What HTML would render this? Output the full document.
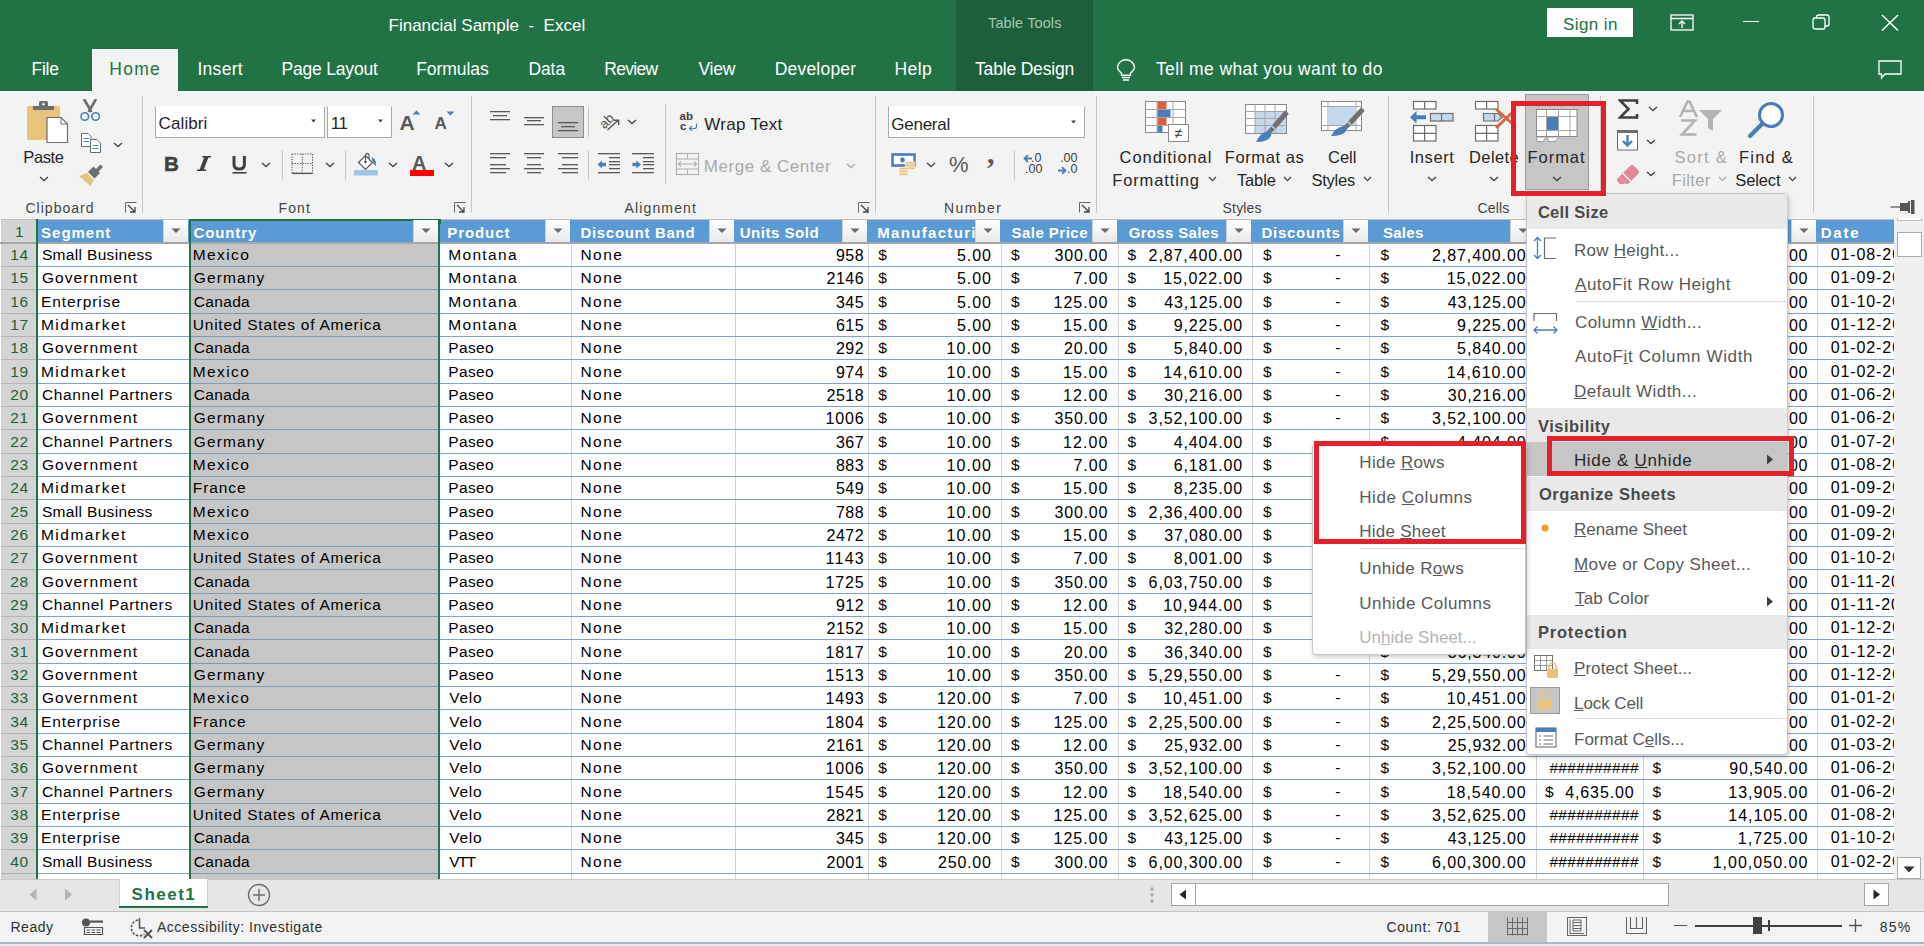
<!DOCTYPE html>
<html><head><meta charset="utf-8"><title>Financial Sample - Excel</title>
<style>
html,body{margin:0;padding:0;}
body{width:1924px;height:946px;overflow:hidden;position:relative;background:#f3f3f3;font-family:"Liberation Sans", sans-serif;}
.r{position:absolute;}
.t{position:absolute;white-space:nowrap;}
</style></head><body>
<div class="r" style="left:0px;top:0px;width:1924px;height:91px;background:#217346"></div><div class="r" style="left:956px;top:0px;width:137px;height:91px;background:#1d5f3a"></div><div class="t" style="left:388.50px;top:16.81px;font-size:17px;line-height:17px;color:#ffffff;font-weight:normal;letter-spacing:0.006px;">Financial Sample &nbsp;-&nbsp; Excel</div><div class="t" style="left:988.10px;top:15.73px;font-size:14.5px;line-height:14.5px;color:#a3c9b0;font-weight:normal;letter-spacing:0.101px;">Table Tools</div><div class="r" style="left:1547px;top:8px;width:86px;height:29px;background:#ffffff"></div><div class="t" style="left:1563.00px;top:15.61px;font-size:17px;line-height:17px;color:#217346;font-weight:normal;letter-spacing:0.413px;">Sign in</div><div class="r" style="left:92px;top:49px;width:86px;height:42px;background:#f3f3f3"></div><div class="t" style="left:31.50px;top:61.19px;font-size:17.5px;line-height:17.5px;color:#ffffff;font-weight:normal;letter-spacing:-0.255px;">File</div><div class="t" style="left:109.30px;top:61.19px;font-size:17.5px;line-height:17.5px;color:#217346;font-weight:normal;letter-spacing:1.251px;">Home</div><div class="t" style="left:197.40px;top:61.19px;font-size:17.5px;line-height:17.5px;color:#ffffff;font-weight:normal;letter-spacing:0.299px;">Insert</div><div class="t" style="left:281.50px;top:61.19px;font-size:17.5px;line-height:17.5px;color:#ffffff;font-weight:normal;letter-spacing:-0.191px;">Page Layout</div><div class="t" style="left:416.20px;top:61.19px;font-size:17.5px;line-height:17.5px;color:#ffffff;font-weight:normal;letter-spacing:-0.054px;">Formulas</div><div class="t" style="left:528.40px;top:61.19px;font-size:17.5px;line-height:17.5px;color:#ffffff;font-weight:normal;letter-spacing:-0.078px;">Data</div><div class="t" style="left:604.30px;top:61.19px;font-size:17.5px;line-height:17.5px;color:#ffffff;font-weight:normal;letter-spacing:-0.728px;">Review</div><div class="t" style="left:698.40px;top:61.19px;font-size:17.5px;line-height:17.5px;color:#ffffff;font-weight:normal;letter-spacing:-0.192px;">View</div><div class="t" style="left:774.70px;top:61.19px;font-size:17.5px;line-height:17.5px;color:#ffffff;font-weight:normal;letter-spacing:0.208px;">Developer</div><div class="t" style="left:894.50px;top:61.19px;font-size:17.5px;line-height:17.5px;color:#ffffff;font-weight:normal;letter-spacing:0.447px;">Help</div><div class="t" style="left:975.00px;top:61.19px;font-size:17.5px;line-height:17.5px;color:#ffffff;font-weight:normal;letter-spacing:-0.176px;">Table Design</div><div class="t" style="left:1155.90px;top:61.19px;font-size:17.5px;line-height:17.5px;color:#ffffff;font-weight:normal;letter-spacing:0.407px;">Tell me what you want to do</div><div class="r" style="left:0px;top:91px;width:1924px;height:128px;background:#f3f3f3"></div><div class="r" style="left:142px;top:96px;width:1px;height:117px;background:#c8c8c8"></div><div class="r" style="left:471px;top:96px;width:1px;height:117px;background:#c8c8c8"></div><div class="r" style="left:875px;top:96px;width:1px;height:117px;background:#c8c8c8"></div><div class="r" style="left:1096px;top:96px;width:1px;height:117px;background:#c8c8c8"></div><div class="r" style="left:1388px;top:96px;width:1px;height:117px;background:#c8c8c8"></div><div class="r" style="left:1600px;top:96px;width:1px;height:117px;background:#c8c8c8"></div><div class="r" style="left:1813px;top:96px;width:1px;height:117px;background:#c8c8c8"></div><div class="t" style="left:25.40px;top:200.85px;font-size:14px;line-height:14px;color:#444444;font-weight:normal;letter-spacing:1.033px;">Clipboard</div><div class="t" style="left:278.60px;top:200.85px;font-size:14px;line-height:14px;color:#444444;font-weight:normal;letter-spacing:1.092px;">Font</div><div class="t" style="left:624.50px;top:200.85px;font-size:14px;line-height:14px;color:#444444;font-weight:normal;letter-spacing:1.142px;">Alignment</div><div class="t" style="left:944.00px;top:200.85px;font-size:14px;line-height:14px;color:#444444;font-weight:normal;letter-spacing:1.434px;">Number</div><div class="t" style="left:1222.60px;top:200.85px;font-size:14px;line-height:14px;color:#444444;font-weight:normal;letter-spacing:0.155px;">Styles</div><div class="t" style="left:1477.60px;top:200.85px;font-size:14px;line-height:14px;color:#444444;font-weight:normal;letter-spacing:0.146px;">Cells</div><svg class="r" style="left:26px;top:100px;" width="44" height="44" viewBox="0 0 44 44"><rect x="1" y="6" width="33" height="34" rx="1.5" fill="#e8c37b"/><rect x="7" y="6" width="21" height="4" fill="#6d6d6d"/><rect x="13" y="1" width="9" height="6" rx="1.5" fill="#6d6d6d"/><circle cx="17.5" cy="4.2" r="1.3" fill="#f3f3f3"/><path d="M21 17.5H35L41.5 24V42.5H21Z" fill="#ffffff" stroke="#6d6d6d" stroke-width="1.2"/><path d="M35 17.5V24H41.5" fill="none" stroke="#6d6d6d" stroke-width="1"/></svg><div class="t" style="left:23.30px;top:148.73px;font-size:16.5px;line-height:16.5px;color:#262626;font-weight:normal;letter-spacing:-0.379px;">Paste</div><svg class="r" style="left:39.0px;top:176px;" width="10" height="6" viewBox="0 0 10 6"><path d="M1 1L5.0 4.6L9 1" fill="none" stroke="#444" stroke-width="1.3"/></svg><svg class="r" style="left:79px;top:99px;" width="22" height="23" viewBox="0 0 22 23"><path d="M5.5 1L12 12M16.5 1L10 12" stroke="#6d6d6d" stroke-width="2.6" stroke-linecap="round"/><circle cx="5.8" cy="17.5" r="3.8" fill="none" stroke="#4a7ebb" stroke-width="1.6"/><circle cx="16.6" cy="17.5" r="3.8" fill="none" stroke="#4a7ebb" stroke-width="1.6"/></svg><svg class="r" style="left:80px;top:132px;" width="23" height="22" viewBox="0 0 23 22"><path d="M1.5 1.5H8L11 4.5V14.5H1.5Z" fill="#fff" stroke="#6d6d6d" stroke-width="1"/><path d="M3.5 6.5H9M3.5 9.5H9" stroke="#4a7ebb" stroke-width="1"/><path d="M10.5 7.5H17L20.5 11V20.5H10.5Z" fill="#fff" stroke="#6d6d6d" stroke-width="1"/><path d="M12.5 13.5H18.5M12.5 16.5H18.5" stroke="#4a7ebb" stroke-width="1"/></svg><svg class="r" style="left:113.0px;top:142px;" width="10" height="6" viewBox="0 0 10 6"><path d="M1 1L5.0 4.6L9 1" fill="none" stroke="#444" stroke-width="1.3"/></svg><svg class="r" style="left:78px;top:164px;" width="26" height="23" viewBox="0 0 26 23"><path d="M17.5 5.5L22.5 0.5L25 3L20 8Z" fill="#6d6d6d"/><path d="M10 8L15.5 2.5L22 9L16.5 14.5Z" fill="#6d6d6d"/><path d="M1 12L9 9L16 16L12.5 22Z" fill="#e8c37b"/></svg><svg class="r" style="left:125px;top:202px;" width="12" height="11" viewBox="0 0 12 11"><path d="M0.5 10.5V0.5H11.5" fill="none" stroke="#666" stroke-width="1"/><path d="M3 3L10 10M10 5V10H5" fill="none" stroke="#444" stroke-width="1.3"/></svg><div class="r" style="left:155px;top:106px;width:170px;height:32px;background:#fff;border:1px solid #ababab;border-top-color:#ffffff;box-sizing:border-box"></div><div class="t" style="left:158.60px;top:115.41px;font-size:17px;line-height:17px;color:#262626;font-weight:normal;letter-spacing:0.100px;">Calibri</div><svg class="r" style="left:310px;top:119px;" width="7" height="5" viewBox="0 0 7 5"><path d="M1 0.5H6L3.5 3.5Z" fill="#444"/></svg><div class="r" style="left:327px;top:106px;width:65px;height:32px;background:#fff;border:1px solid #ababab;border-top-color:#ffffff;box-sizing:border-box"></div><div class="t" style="left:330.80px;top:115.41px;font-size:17px;line-height:17px;color:#262626;font-weight:normal;letter-spacing:-0.393px;">11</div><svg class="r" style="left:377px;top:119px;" width="7" height="5" viewBox="0 0 7 5"><path d="M1 0.5H6L3.5 3.5Z" fill="#444"/></svg><div class="t" style="left:399.50px;top:112.02px;font-size:21px;line-height:21px;color:#595959;font-weight:bold;">A</div><svg class="r" style="left:412px;top:110px;" width="9" height="5" viewBox="0 0 9 5"><path d="M0.5 4.5L4.5 0.5L8.5 4.5Z" fill="#4a7ebb"/></svg><div class="t" style="left:434.50px;top:115.41px;font-size:17px;line-height:17px;color:#595959;font-weight:bold;">A</div><svg class="r" style="left:446px;top:111px;" width="9" height="5" viewBox="0 0 9 5"><path d="M0.5 0.5H8.5L4.5 4.5Z" fill="#4a7ebb"/></svg><div class="t" style="left:164.00px;top:153.95px;font-size:20.5px;line-height:20.5px;color:#404040;font-weight:bold;-webkit-text-stroke:0.5px #404040">B</div><svg class="r" style="left:196px;top:155px;" width="16" height="17" viewBox="0 0 16 17"><path d="M6.5 1H15V2.6H12.4L7.8 14.4H10.2V16H1V14.4H3.6L8.2 2.6H6Z" fill="#404040"/></svg><svg class="r" style="left:231px;top:155px;" width="17" height="20" viewBox="0 0 17 20"><path d="M3 1V9.5Q3 14 8.2 14Q13.4 14 13.4 9.5V1" fill="none" stroke="#404040" stroke-width="3"/><rect x="1.5" y="17" width="14" height="1.6" fill="#404040"/></svg><svg class="r" style="left:261.0px;top:162px;" width="10" height="6" viewBox="0 0 10 6"><path d="M1 1L5.0 4.6L9 1" fill="none" stroke="#444" stroke-width="1.3"/></svg><div class="r" style="left:282px;top:150px;width:1px;height:30px;background:#c8c8c8"></div><svg class="r" style="left:291px;top:153px;" width="23" height="22" viewBox="0 0 23 22"><rect x="1" y="1" width="20.5" height="19" fill="none" stroke="#555" stroke-width="1" stroke-dasharray="1.3 1.3"/><path d="M11.2 1V20M1 10.5H21.5" stroke="#555" stroke-width="1" stroke-dasharray="1.3 1.3"/><path d="M1 20.5H21.5" stroke="#555" stroke-width="1.2"/></svg><svg class="r" style="left:325.0px;top:162px;" width="10" height="6" viewBox="0 0 10 6"><path d="M1 1L5.0 4.6L9 1" fill="none" stroke="#444" stroke-width="1.3"/></svg><div class="r" style="left:345px;top:150px;width:1px;height:30px;background:#c8c8c8"></div><svg class="r" style="left:353px;top:152px;" width="26" height="25" viewBox="0 0 26 25"><path d="M5.5 10.5L12.5 3.5L19.5 10.5L12.5 17.5Z" fill="#fff" stroke="#555" stroke-width="1.2"/><path d="M12.5 10V2.8A1.8 1.8 0 0 1 16 2.8V6.5" fill="none" stroke="#555" stroke-width="1.1"/><circle cx="12.5" cy="10" r="1.3" fill="#555"/><path d="M18.5 5.5C21.5 6 23.5 9 23 14L20.5 11.5Z" fill="#4a7ebb"/><rect x="1" y="18" width="24" height="5.5" fill="#9dc3e6"/></svg><svg class="r" style="left:388.0px;top:162px;" width="10" height="6" viewBox="0 0 10 6"><path d="M1 1L5.0 4.6L9 1" fill="none" stroke="#444" stroke-width="1.3"/></svg><div class="t" style="left:412.00px;top:152.87px;font-size:20px;line-height:20px;color:#595959;font-weight:bold;">A</div><div class="r" style="left:410px;top:170px;width:24px;height:6px;background:#ff0000"></div><svg class="r" style="left:444.0px;top:162px;" width="10" height="6" viewBox="0 0 10 6"><path d="M1 1L5.0 4.6L9 1" fill="none" stroke="#444" stroke-width="1.3"/></svg><svg class="r" style="left:454px;top:202px;" width="12" height="11" viewBox="0 0 12 11"><path d="M0.5 10.5V0.5H11.5" fill="none" stroke="#666" stroke-width="1"/><path d="M3 3L10 10M10 5V10H5" fill="none" stroke="#444" stroke-width="1.3"/></svg><svg class="r" style="left:489px;top:110px;" width="22" height="12" viewBox="0 0 22 12"><rect x="1" y="1" width="20" height="1.3" fill="#595959"/><rect x="4" y="5" width="14" height="1.3" fill="#595959"/><rect x="1" y="9" width="20" height="1.3" fill="#595959"/></svg><svg class="r" style="left:523px;top:116px;" width="22" height="12" viewBox="0 0 22 12"><rect x="1" y="1" width="20" height="1.3" fill="#595959"/><rect x="4" y="4" width="14" height="1.3" fill="#595959"/><rect x="1" y="8" width="20" height="1.3" fill="#595959"/></svg><div class="r" style="left:552px;top:106px;width:32px;height:32px;background:#c6c6c6;border:1px solid #8e8e8e;box-sizing:border-box"></div><svg class="r" style="left:557px;top:121px;" width="22" height="12" viewBox="0 0 22 12"><rect x="1" y="1" width="20" height="1.3" fill="#595959"/><rect x="4" y="5" width="14" height="1.3" fill="#595959"/><rect x="1" y="9" width="20" height="1.3" fill="#595959"/></svg><div class="r" style="left:588px;top:107px;width:1px;height:30px;background:#c8c8c8"></div><svg class="r" style="left:597px;top:110px;" width="26" height="24" viewBox="0 0 26 24"><text x="0" y="0" transform="translate(7.5,19.5) rotate(-45)" font-family="Liberation Sans" font-size="13.5" fill="#555">ab</text><path d="M10.5 20L21.5 10M17 10.3H21.7V15" fill="none" stroke="#555" stroke-width="1.4"/></svg><svg class="r" style="left:627.0px;top:119px;" width="10" height="6" viewBox="0 0 10 6"><path d="M1 1L5.0 4.6L9 1" fill="none" stroke="#444" stroke-width="1.3"/></svg><div class="r" style="left:665px;top:104px;width:1px;height:80px;background:#c8c8c8"></div><svg class="r" style="left:489px;top:153px;" width="22" height="22" viewBox="0 0 22 22"><rect x="1" y="0" width="20" height="1.3" fill="#595959"/><rect x="1" y="4" width="16" height="1.3" fill="#595959"/><rect x="1" y="11" width="16" height="1.3" fill="#595959"/><rect x="1" y="15" width="20" height="1.3" fill="#595959"/><rect x="1" y="19" width="16" height="1.3" fill="#595959"/></svg><svg class="r" style="left:523px;top:153px;" width="22" height="22" viewBox="0 0 22 22"><rect x="1" y="0" width="20" height="1.3" fill="#595959"/><rect x="4" y="4" width="14" height="1.3" fill="#595959"/><rect x="4" y="11" width="14" height="1.3" fill="#595959"/><rect x="1" y="15" width="20" height="1.3" fill="#595959"/><rect x="4" y="19" width="14" height="1.3" fill="#595959"/></svg><svg class="r" style="left:557px;top:153px;" width="22" height="22" viewBox="0 0 22 22"><rect x="1" y="0" width="20" height="1.3" fill="#595959"/><rect x="5" y="4" width="16" height="1.3" fill="#595959"/><rect x="5" y="11" width="16" height="1.3" fill="#595959"/><rect x="1" y="15" width="20" height="1.3" fill="#595959"/><rect x="5" y="19" width="16" height="1.3" fill="#595959"/></svg><div class="r" style="left:588px;top:150px;width:1px;height:30px;background:#c8c8c8"></div><svg class="r" style="left:596px;top:153px;" width="26" height="22" viewBox="0 0 26 22"><rect x="2" y="0" width="22" height="1.3" fill="#595959"/><rect x="13" y="4" width="11" height="1.3" fill="#595959"/><rect x="13" y="11" width="11" height="1.3" fill="#595959"/><rect x="13" y="15" width="11" height="1.3" fill="#595959"/><rect x="2" y="19" width="22" height="1.3" fill="#595959"/><rect x="13" y="8" width="11" height="1.3" fill="#595959"/><path d="M1.5 11.5L6 7.5V9.8H10V13.2H6V15.5Z" fill="#4a7ebb"/></svg><svg class="r" style="left:630px;top:153px;" width="26" height="22" viewBox="0 0 26 22"><rect x="2" y="0" width="22" height="1.3" fill="#595959"/><rect x="13" y="4" width="11" height="1.3" fill="#595959"/><rect x="13" y="11" width="11" height="1.3" fill="#595959"/><rect x="13" y="15" width="11" height="1.3" fill="#595959"/><rect x="2" y="19" width="22" height="1.3" fill="#595959"/><rect x="13" y="8" width="11" height="1.3" fill="#595959"/><path d="M11 11.5L6.5 7.5V9.8H2.5V13.2H6.5V15.5Z" fill="#4a7ebb"/></svg><div class="t" style="left:679.50px;top:110.77px;font-size:11.5px;line-height:11.5px;color:#404040;font-weight:bold;">ab</div><div class="t" style="left:680.00px;top:121.27px;font-size:11.5px;line-height:11.5px;color:#404040;font-weight:bold;">c</div><svg class="r" style="left:688px;top:123px;" width="10" height="8" viewBox="0 0 10 8"><path d="M8.5 0.5V3.5Q8.5 5.5 6.5 5.5H2M4 3L1.5 5.5L4 8" fill="none" stroke="#4a7ebb" stroke-width="1.2"/></svg><div class="t" style="left:704.30px;top:115.61px;font-size:17px;line-height:17px;color:#262626;font-weight:normal;letter-spacing:0.252px;">Wrap Text</div><svg class="r" style="left:675px;top:152px;" width="25" height="24" viewBox="0 0 25 24"><rect x="1.5" y="1.5" width="22" height="21" fill="none" stroke="#b0b0b0" stroke-width="1.1"/><path d="M1.5 7H23.5M1.5 17H23.5M12.5 1.5V7M12.5 17V22.5" stroke="#b0b0b0" stroke-width="1.1"/><path d="M3.5 12H21.5M6 9.5L3.5 12L6 14.5M19 9.5L21.5 12L19 14.5" fill="none" stroke="#b0b0b0" stroke-width="1.1"/></svg><div class="t" style="left:703.80px;top:158.11px;font-size:17px;line-height:17px;color:#a9a9a9;font-weight:normal;letter-spacing:0.536px;">Merge &amp; Center</div><svg class="r" style="left:846.0px;top:163px;" width="10" height="6" viewBox="0 0 10 6"><path d="M1 1L5.0 4.6L9 1" fill="none" stroke="#a9a9a9" stroke-width="1.3"/></svg><svg class="r" style="left:858px;top:202px;" width="12" height="11" viewBox="0 0 12 11"><path d="M0.5 10.5V0.5H11.5" fill="none" stroke="#666" stroke-width="1"/><path d="M3 3L10 10M10 5V10H5" fill="none" stroke="#444" stroke-width="1.3"/></svg><div class="r" style="left:888px;top:106px;width:197px;height:32px;background:#fff;border:1px solid #ababab;border-top-color:#ffffff;box-sizing:border-box"></div><div class="t" style="left:891.30px;top:115.61px;font-size:17px;line-height:17px;color:#262626;font-weight:normal;letter-spacing:-0.267px;">General</div><svg class="r" style="left:1070px;top:120px;" width="7" height="5" viewBox="0 0 7 5"><path d="M1 0.5H6L3.5 3.5Z" fill="#444"/></svg><svg class="r" style="left:891px;top:153px;" width="25" height="24" viewBox="0 0 25 24"><rect x="1.5" y="1.5" width="22" height="11" fill="#fff" stroke="#4a7ebb" stroke-width="2.6"/><circle cx="11.5" cy="7" r="2.4" fill="#4a7ebb"/><g fill="#f0c27f" stroke="#f3f3f3" stroke-width="0.6"><rect x="14" y="8.5" width="10" height="2.6" rx="1"/><rect x="14" y="11.2" width="10" height="2.6" rx="1"/><rect x="14" y="13.9" width="10" height="2.6" rx="1"/><rect x="8" y="14.5" width="9" height="2.6" rx="1"/><rect x="8" y="17.2" width="9" height="2.6" rx="1"/><rect x="8" y="19.9" width="9" height="2.6" rx="1"/></g></svg><svg class="r" style="left:926.0px;top:162px;" width="10" height="6" viewBox="0 0 10 6"><path d="M1 1L5.0 4.6L9 1" fill="none" stroke="#444" stroke-width="1.3"/></svg><div class="t" style="left:949.00px;top:154.38px;font-size:22px;line-height:22px;color:#595959;font-weight:normal;">%</div><div class="t" style="left:987.00px;top:137.60px;font-size:30px;line-height:30px;color:#595959;font-weight:bold;font-family:'Liberation Serif',serif">&#x2C;</div><div class="r" style="left:1014px;top:150px;width:1px;height:30px;background:#c8c8c8"></div><div class="t" style="left:1031.00px;top:152.42px;font-size:12.5px;line-height:12.5px;color:#404040;font-weight:normal;">.0</div><div class="t" style="left:1025.00px;top:163.42px;font-size:12.5px;line-height:12.5px;color:#404040;font-weight:normal;">.00</div><svg class="r" style="left:1023px;top:154px;" width="10" height="9" viewBox="0 0 10 9"><path d="M9 4.5H2M5 1.2L1.5 4.5L5 7.8" fill="none" stroke="#4a7ebb" stroke-width="1.8"/></svg><div class="t" style="left:1060.00px;top:152.42px;font-size:12.5px;line-height:12.5px;color:#404040;font-weight:normal;">.00</div><div class="t" style="left:1067.00px;top:163.42px;font-size:12.5px;line-height:12.5px;color:#404040;font-weight:normal;">.0</div><svg class="r" style="left:1057px;top:166px;" width="10" height="9" viewBox="0 0 10 9"><path d="M1 4.5H8M5 1.2L8.5 4.5L5 7.8" fill="none" stroke="#4a7ebb" stroke-width="1.8"/></svg><svg class="r" style="left:1079px;top:202px;" width="12" height="11" viewBox="0 0 12 11"><path d="M0.5 10.5V0.5H11.5" fill="none" stroke="#666" stroke-width="1"/><path d="M3 3L10 10M10 5V10H5" fill="none" stroke="#444" stroke-width="1.3"/></svg><svg class="r" style="left:1144px;top:100px;" width="46" height="43" viewBox="0 0 46 43"><rect x="1.5" y="1.5" width="40" height="31" fill="#fff" stroke="#8a8a8a" stroke-width="1"/><path d="M1.5 9.5H41.5M1.5 17.5H41.5M1.5 25.5H41.5M13 1.5V32.5M29 1.5V32.5" stroke="#a6a6a6" stroke-width="1"/><rect x="13.5" y="2" width="9" height="7" fill="#e05f3a"/><rect x="13.5" y="10" width="13" height="7" fill="#4a7ebb"/><rect x="13.5" y="18" width="9" height="7" fill="#e05f3a"/><rect x="13.5" y="26" width="5" height="6.5" fill="#4a7ebb"/><rect x="24.5" y="24.5" width="20" height="17" fill="#fff" stroke="#8a8a8a" stroke-width="1"/><text x="34.5" y="38" text-anchor="middle" font-family="Liberation Sans" font-size="14" fill="#333">&#x2260;</text></svg><div class="t" style="left:1119.60px;top:149.03px;font-size:16.5px;line-height:16.5px;color:#262626;font-weight:normal;letter-spacing:0.921px;">Conditional</div><div class="t" style="left:1112.20px;top:171.53px;font-size:16.5px;line-height:16.5px;color:#262626;font-weight:normal;letter-spacing:0.880px;">Formatting</div><svg class="r" style="left:1207.5px;top:176px;" width="9" height="6" viewBox="0 0 9 6"><path d="M1 1L4.5 4.6L8 1" fill="none" stroke="#444" stroke-width="1.3"/></svg><svg class="r" style="left:1244px;top:103px;" width="48" height="41" viewBox="0 0 48 41"><rect x="1.5" y="1.5" width="41" height="29" fill="#fff" stroke="#8a8a8a" stroke-width="1"/><rect x="11" y="9" width="31" height="21" fill="#c5d8ee"/><path d="M1.5 8.5H41.5M1.5 15.5H41.5M1.5 22.5H41.5M11 1.5V30.5M21 1.5V30.5M31 1.5V30.5" stroke="#a6a6a6" stroke-width="1"/><path d="M30 24L43 9" stroke="#707070" stroke-width="5"/><path d="M24 30L29 25" stroke="#707070" stroke-width="4.5"/><path d="M12 39Q16 30 24 28Q28 28 27 33Q24 39 12 39Z" fill="#4a7ebb"/></svg><div class="t" style="left:1224.80px;top:149.03px;font-size:16.5px;line-height:16.5px;color:#262626;font-weight:normal;letter-spacing:0.585px;">Format as</div><div class="t" style="left:1236.90px;top:171.53px;font-size:16.5px;line-height:16.5px;color:#262626;font-weight:normal;letter-spacing:-0.117px;">Table</div><svg class="r" style="left:1282.5px;top:176px;" width="9" height="6" viewBox="0 0 9 6"><path d="M1 1L4.5 4.6L8 1" fill="none" stroke="#444" stroke-width="1.3"/></svg><svg class="r" style="left:1320px;top:100px;" width="48" height="41" viewBox="0 0 48 41"><rect x="1.5" y="1.5" width="40" height="29" fill="#fff" stroke="#8a8a8a" stroke-width="1"/><path d="M1.5 6.5H41.5M1.5 25.5H41.5M8 1.5V30.5M36 1.5V30.5" stroke="#a6a6a6" stroke-width="1"/><rect x="8.5" y="7" width="27" height="18" fill="#c5d8ee"/><path d="M30 23L43 9" stroke="#707070" stroke-width="5"/><path d="M24 29L29 24" stroke="#707070" stroke-width="4.5"/><path d="M11 36Q15 28 23 26Q27 26 26 31Q23 36 11 36Z" fill="#4a7ebb"/></svg><div class="t" style="left:1328.00px;top:149.03px;font-size:16.5px;line-height:16.5px;color:#262626;font-weight:normal;letter-spacing:0.014px;">Cell</div><div class="t" style="left:1311.40px;top:171.53px;font-size:16.5px;line-height:16.5px;color:#262626;font-weight:normal;letter-spacing:-0.216px;">Styles</div><svg class="r" style="left:1362.5px;top:176px;" width="9" height="6" viewBox="0 0 9 6"><path d="M1 1L4.5 4.6L8 1" fill="none" stroke="#444" stroke-width="1.3"/></svg><svg class="r" style="left:1408px;top:100px;" width="47" height="42" viewBox="0 0 47 42"><rect x="5.5" y="1.5" width="22.5" height="7.5" fill="#fff" stroke="#6d6d6d" stroke-width="1.2"/><path d="M16.6 1.5V9" stroke="#6d6d6d" stroke-width="1.2"/><rect x="22.5" y="13.5" width="22.5" height="7.5" fill="#c5d8ee" stroke="#6d6d6d" stroke-width="1.2"/><path d="M33.6 13.5V21" stroke="#6d6d6d" stroke-width="1.2"/><path d="M2 17.2L8.5 11V15.2H18V19.2H8.5V23.4Z" fill="#4a7ebb"/><rect x="5.5" y="25.5" width="22.5" height="15.5" fill="#fff" stroke="#6d6d6d" stroke-width="1.2"/><path d="M16.6 25.5V41M5.5 33.3H28" stroke="#6d6d6d" stroke-width="1.2"/></svg><div class="t" style="left:1409.70px;top:148.53px;font-size:16.5px;line-height:16.5px;color:#262626;font-weight:normal;letter-spacing:0.584px;">Insert</div><svg class="r" style="left:1427.0px;top:176px;" width="10" height="6" viewBox="0 0 10 6"><path d="M1 1L5.0 4.6L9 1" fill="none" stroke="#444" stroke-width="1.3"/></svg><svg class="r" style="left:1473px;top:100px;" width="47" height="42" viewBox="0 0 47 42"><rect x="2.5" y="1.5" width="22.5" height="7.5" fill="#fff" stroke="#6d6d6d" stroke-width="1.2"/><path d="M13.6 1.5V9" stroke="#6d6d6d" stroke-width="1.2"/><path d="M10.5 13.5H25L29 17.2L25 21H10.5Z" fill="#c5d8ee" stroke="#6d6d6d" stroke-width="1.2"/><path d="M21.5 13.5V21" stroke="#6d6d6d" stroke-width="1.2"/><rect x="2.5" y="25.5" width="22.5" height="15.5" fill="#fff" stroke="#6d6d6d" stroke-width="1.2"/><path d="M13.6 25.5V41M2.5 33.3H25" stroke="#6d6d6d" stroke-width="1.2"/><path d="M24 10L42 26M42 10L24 27" stroke="#d9663c" stroke-width="3" stroke-linecap="round"/></svg><div class="t" style="left:1469.00px;top:148.53px;font-size:16.5px;line-height:16.5px;color:#262626;font-weight:normal;letter-spacing:0.416px;">Delete</div><svg class="r" style="left:1489.0px;top:176px;" width="10" height="6" viewBox="0 0 10 6"><path d="M1 1L5.0 4.6L9 1" fill="none" stroke="#444" stroke-width="1.3"/></svg><div class="r" style="left:1525px;top:94px;width:64px;height:96px;background:#c6c6c6;border:1px solid #9a9a9a;box-sizing:border-box"></div><svg class="r" style="left:1535px;top:100px;" width="44" height="43" viewBox="0 0 44 43"><path d="M4 1.5V7M15 1.5V7M27 1.5V7M39 1.5V7" stroke="#8a8a8a" stroke-width="1"/><rect x="1.5" y="9.5" width="40.5" height="27" fill="#fff" stroke="#8a8a8a" stroke-width="1"/><path d="M1.5 16.5H42M1.5 30.5H42M11.5 9.5V36.5M23.5 9.5V36.5M35 9.5V36.5" stroke="#a6a6a6" stroke-width="1"/><rect x="12" y="17" width="11" height="13" fill="#4a7ebb"/><path d="M2 37H11L8 41.5H2Z M13 37H24L20 41.5H13Z" fill="#fff" stroke="#8a8a8a" stroke-width="0.8"/></svg><div class="t" style="left:1527.60px;top:148.53px;font-size:16.5px;line-height:16.5px;color:#262626;font-weight:normal;letter-spacing:0.946px;">Format</div><svg class="r" style="left:1552.0px;top:176px;" width="10" height="6" viewBox="0 0 10 6"><path d="M1 1L5.0 4.6L9 1" fill="none" stroke="#444" stroke-width="1.3"/></svg><svg class="r" style="left:1618px;top:99px;" width="21" height="20" viewBox="0 0 21 20"><path d="M19 5V1.5H2L10.5 10L2 18.5H19V15" fill="none" stroke="#404040" stroke-width="2.6" stroke-linejoin="miter"/></svg><svg class="r" style="left:1648.0px;top:106px;" width="10" height="6" viewBox="0 0 10 6"><path d="M1 1L5.0 4.6L9 1" fill="none" stroke="#444" stroke-width="1.3"/></svg><svg class="r" style="left:1616px;top:129px;" width="23" height="23" viewBox="0 0 23 23"><rect x="1.5" y="1.5" width="20" height="19.5" fill="#fff" stroke="#6d6d6d" stroke-width="1"/><rect x="1" y="1" width="21" height="3" fill="#6d6d6d"/><path d="M11.5 6V16M7 12L11.5 16.5L16 12" fill="none" stroke="#4a7ebb" stroke-width="2.4"/></svg><svg class="r" style="left:1646.0px;top:139px;" width="10" height="6" viewBox="0 0 10 6"><path d="M1 1L5.0 4.6L9 1" fill="none" stroke="#444" stroke-width="1.3"/></svg><svg class="r" style="left:1617px;top:162px;" width="24" height="22" viewBox="0 0 24 22"><path d="M2 15L13 4Q15 2 17 4L21 8Q23 10 21 12L10 23" fill="#e2879a"/><path d="M2 15L8 21L6.5 22.5Q5 24 3.5 22.5L0.5 19.5Q-1 18 0.5 16.5Z" fill="#e2879a"/><path d="M6 11.5L14 19.5" stroke="#f3f3f3" stroke-width="1.6"/></svg><svg class="r" style="left:1646.0px;top:171px;" width="10" height="6" viewBox="0 0 10 6"><path d="M1 1L5.0 4.6L9 1" fill="none" stroke="#444" stroke-width="1.3"/></svg><svg class="r" style="left:1678px;top:100px;" width="21" height="38" viewBox="0 0 21 38"><path d="M2 17L9.5 1.5H11.5L19 17M5.5 11H15.5" fill="none" stroke="#b3b3b3" stroke-width="2.6"/><path d="M3 20.5H17L4 34.5H18.5" fill="none" stroke="#b3b3b3" stroke-width="2.6"/></svg><svg class="r" style="left:1698px;top:109px;" width="25" height="24" viewBox="0 0 25 24"><path d="M1 1H24L15 10V22L10 19V10Z" fill="#b3b3b3"/><path d="M3 2.5H22" stroke="#f3f3f3" stroke-width="0"/></svg><div class="t" style="left:1674.40px;top:148.53px;font-size:16.5px;line-height:16.5px;color:#a9a9a9;font-weight:normal;letter-spacing:1.311px;">Sort &amp;</div><div class="t" style="left:1671.70px;top:171.53px;font-size:16.5px;line-height:16.5px;color:#a9a9a9;font-weight:normal;letter-spacing:0.386px;">Filter</div><svg class="r" style="left:1717.5px;top:176px;" width="9" height="6" viewBox="0 0 9 6"><path d="M1 1L4.5 4.6L8 1" fill="none" stroke="#a9a9a9" stroke-width="1.3"/></svg><svg class="r" style="left:1745px;top:100px;" width="44" height="40" viewBox="0 0 44 40"><circle cx="26" cy="15" r="11.5" fill="#fff" stroke="#4a7ebb" stroke-width="3"/><path d="M17.5 23.5L5 36" stroke="#4a7ebb" stroke-width="4.2" stroke-linecap="round"/></svg><div class="t" style="left:1739.00px;top:148.53px;font-size:16.5px;line-height:16.5px;color:#262626;font-weight:normal;letter-spacing:1.224px;">Find &amp;</div><div class="t" style="left:1735.30px;top:171.53px;font-size:16.5px;line-height:16.5px;color:#262626;font-weight:normal;letter-spacing:-0.115px;">Select</div><svg class="r" style="left:1787.5px;top:176px;" width="9" height="6" viewBox="0 0 9 6"><path d="M1 1L4.5 4.6L8 1" fill="none" stroke="#444" stroke-width="1.3"/></svg><svg class="r" style="left:1890px;top:198px;" width="27" height="17" viewBox="0 0 27 17"><path d="M0.5 9H12" stroke="#555" stroke-width="1.2"/><path d="M10 5H18V3H20V15H18V13H10Z" fill="#555"/><rect x="21" y="2" width="3.5" height="14" fill="#555"/></svg><svg class="r" style="left:1670px;top:14px;" width="24" height="17" viewBox="0 0 24 17"><rect x="1" y="1" width="22" height="15" fill="none" stroke="#fff" stroke-width="1.3"/><path d="M1 4.5H23M12 14V7.5M9 10L12 7L15 10" fill="none" stroke="#fff" stroke-width="1.3"/></svg><div class="r" style="left:1743px;top:21px;width:16px;height:1.3px;background:#fff"></div><svg class="r" style="left:1812px;top:14px;" width="18" height="16" viewBox="0 0 18 16"><rect x="1" y="4" width="12" height="11" rx="2" fill="none" stroke="#fff" stroke-width="1.3"/><path d="M4.5 4V3Q4.5 1 6.5 1H15Q17 1 17 3V10Q17 12 15 12H13" fill="none" stroke="#fff" stroke-width="1.3"/></svg><svg class="r" style="left:1880px;top:13px;" width="20" height="19" viewBox="0 0 20 19"><path d="M2 2L18 17.5M18 2L2 17.5" stroke="#fff" stroke-width="1.5"/></svg><svg class="r" style="left:1116px;top:59px;" width="20" height="22" viewBox="0 0 20 22"><path d="M5.5 14Q1.5 11 1.5 8A8.5 8.5 0 0 1 10 0.8A8.5 8.5 0 0 1 18.5 8Q18.5 11 14.5 14V16.2H5.5Z" fill="none" stroke="#fff" stroke-width="1.4"/><path d="M6 18.5H14M7 21H13" stroke="#fff" stroke-width="1.4"/></svg><svg class="r" style="left:1878px;top:60px;" width="24" height="20" viewBox="0 0 24 20"><path d="M1 1H23V14H7L3.5 18V14H1Z" fill="none" stroke="#fff" stroke-width="1.3"/></svg><div class="r" style="left:0px;top:219px;width:1894px;height:660px;background:#ffffff"></div><div class="r" style="left:1px;top:219px;width:36px;height:660px;background:#d4d4d4"></div><div class="r" style="left:1px;top:219px;width:1893px;height:1px;background:#bdbdbd"></div><div class="r" style="left:38px;top:220px;width:1856px;height:22px;background:#5b9bd5"></div><div class="r" style="left:0px;top:242px;width:1894px;height:2px;background:#a6a6a6"></div><div class="r" style="left:190px;top:244px;width:249px;height:635px;background:#c6c6c6"></div><div class="r" style="left:571px;top:244px;width:1px;height:635px;background:#d4d4d4"></div><div class="r" style="left:735px;top:244px;width:1px;height:635px;background:#d4d4d4"></div><div class="r" style="left:868px;top:244px;width:1px;height:635px;background:#d4d4d4"></div><div class="r" style="left:1001px;top:244px;width:1px;height:635px;background:#d4d4d4"></div><div class="r" style="left:1118px;top:244px;width:1px;height:635px;background:#d4d4d4"></div><div class="r" style="left:1252px;top:244px;width:1px;height:635px;background:#d4d4d4"></div><div class="r" style="left:1369px;top:244px;width:1px;height:635px;background:#d4d4d4"></div><div class="r" style="left:1536px;top:244px;width:1px;height:635px;background:#d4d4d4"></div><div class="r" style="left:1643px;top:244px;width:1px;height:635px;background:#d4d4d4"></div><div class="r" style="left:1817px;top:244px;width:1px;height:635px;background:#d4d4d4"></div><div class="r" style="left:38px;top:266px;width:1856px;height:1px;background:#7ea3cf"></div><div class="r" style="left:190px;top:266px;width:249px;height:1px;background:#7a9cbc"></div><div class="r" style="left:1px;top:266px;width:36px;height:1px;background:#b4b4b4"></div><div class="r" style="left:38px;top:289px;width:1856px;height:1px;background:#7ea3cf"></div><div class="r" style="left:190px;top:289px;width:249px;height:1px;background:#7a9cbc"></div><div class="r" style="left:1px;top:289px;width:36px;height:1px;background:#b4b4b4"></div><div class="r" style="left:38px;top:313px;width:1856px;height:1px;background:#7ea3cf"></div><div class="r" style="left:190px;top:313px;width:249px;height:1px;background:#7a9cbc"></div><div class="r" style="left:1px;top:313px;width:36px;height:1px;background:#b4b4b4"></div><div class="r" style="left:38px;top:336px;width:1856px;height:1px;background:#7ea3cf"></div><div class="r" style="left:190px;top:336px;width:249px;height:1px;background:#7a9cbc"></div><div class="r" style="left:1px;top:336px;width:36px;height:1px;background:#b4b4b4"></div><div class="r" style="left:38px;top:359px;width:1856px;height:1px;background:#7ea3cf"></div><div class="r" style="left:190px;top:359px;width:249px;height:1px;background:#7a9cbc"></div><div class="r" style="left:1px;top:359px;width:36px;height:1px;background:#b4b4b4"></div><div class="r" style="left:38px;top:383px;width:1856px;height:1px;background:#7ea3cf"></div><div class="r" style="left:190px;top:383px;width:249px;height:1px;background:#7a9cbc"></div><div class="r" style="left:1px;top:383px;width:36px;height:1px;background:#b4b4b4"></div><div class="r" style="left:38px;top:406px;width:1856px;height:1px;background:#7ea3cf"></div><div class="r" style="left:190px;top:406px;width:249px;height:1px;background:#7a9cbc"></div><div class="r" style="left:1px;top:406px;width:36px;height:1px;background:#b4b4b4"></div><div class="r" style="left:38px;top:429px;width:1856px;height:1px;background:#7ea3cf"></div><div class="r" style="left:190px;top:429px;width:249px;height:1px;background:#7a9cbc"></div><div class="r" style="left:1px;top:429px;width:36px;height:1px;background:#b4b4b4"></div><div class="r" style="left:38px;top:453px;width:1856px;height:1px;background:#7ea3cf"></div><div class="r" style="left:190px;top:453px;width:249px;height:1px;background:#7a9cbc"></div><div class="r" style="left:1px;top:453px;width:36px;height:1px;background:#b4b4b4"></div><div class="r" style="left:38px;top:476px;width:1856px;height:1px;background:#7ea3cf"></div><div class="r" style="left:190px;top:476px;width:249px;height:1px;background:#7a9cbc"></div><div class="r" style="left:1px;top:476px;width:36px;height:1px;background:#b4b4b4"></div><div class="r" style="left:38px;top:499px;width:1856px;height:1px;background:#7ea3cf"></div><div class="r" style="left:190px;top:499px;width:249px;height:1px;background:#7a9cbc"></div><div class="r" style="left:1px;top:499px;width:36px;height:1px;background:#b4b4b4"></div><div class="r" style="left:38px;top:523px;width:1856px;height:1px;background:#7ea3cf"></div><div class="r" style="left:190px;top:523px;width:249px;height:1px;background:#7a9cbc"></div><div class="r" style="left:1px;top:523px;width:36px;height:1px;background:#b4b4b4"></div><div class="r" style="left:38px;top:546px;width:1856px;height:1px;background:#7ea3cf"></div><div class="r" style="left:190px;top:546px;width:249px;height:1px;background:#7a9cbc"></div><div class="r" style="left:1px;top:546px;width:36px;height:1px;background:#b4b4b4"></div><div class="r" style="left:38px;top:569px;width:1856px;height:1px;background:#7ea3cf"></div><div class="r" style="left:190px;top:569px;width:249px;height:1px;background:#7a9cbc"></div><div class="r" style="left:1px;top:569px;width:36px;height:1px;background:#b4b4b4"></div><div class="r" style="left:38px;top:593px;width:1856px;height:1px;background:#7ea3cf"></div><div class="r" style="left:190px;top:593px;width:249px;height:1px;background:#7a9cbc"></div><div class="r" style="left:1px;top:593px;width:36px;height:1px;background:#b4b4b4"></div><div class="r" style="left:38px;top:616px;width:1856px;height:1px;background:#7ea3cf"></div><div class="r" style="left:190px;top:616px;width:249px;height:1px;background:#7a9cbc"></div><div class="r" style="left:1px;top:616px;width:36px;height:1px;background:#b4b4b4"></div><div class="r" style="left:38px;top:639px;width:1856px;height:1px;background:#7ea3cf"></div><div class="r" style="left:190px;top:639px;width:249px;height:1px;background:#7a9cbc"></div><div class="r" style="left:1px;top:639px;width:36px;height:1px;background:#b4b4b4"></div><div class="r" style="left:38px;top:663px;width:1856px;height:1px;background:#7ea3cf"></div><div class="r" style="left:190px;top:663px;width:249px;height:1px;background:#7a9cbc"></div><div class="r" style="left:1px;top:663px;width:36px;height:1px;background:#b4b4b4"></div><div class="r" style="left:38px;top:686px;width:1856px;height:1px;background:#7ea3cf"></div><div class="r" style="left:190px;top:686px;width:249px;height:1px;background:#7a9cbc"></div><div class="r" style="left:1px;top:686px;width:36px;height:1px;background:#b4b4b4"></div><div class="r" style="left:38px;top:709px;width:1856px;height:1px;background:#7ea3cf"></div><div class="r" style="left:190px;top:709px;width:249px;height:1px;background:#7a9cbc"></div><div class="r" style="left:1px;top:709px;width:36px;height:1px;background:#b4b4b4"></div><div class="r" style="left:38px;top:733px;width:1856px;height:1px;background:#7ea3cf"></div><div class="r" style="left:190px;top:733px;width:249px;height:1px;background:#7a9cbc"></div><div class="r" style="left:1px;top:733px;width:36px;height:1px;background:#b4b4b4"></div><div class="r" style="left:38px;top:756px;width:1856px;height:1px;background:#7ea3cf"></div><div class="r" style="left:190px;top:756px;width:249px;height:1px;background:#7a9cbc"></div><div class="r" style="left:1px;top:756px;width:36px;height:1px;background:#b4b4b4"></div><div class="r" style="left:38px;top:779px;width:1856px;height:1px;background:#7ea3cf"></div><div class="r" style="left:190px;top:779px;width:249px;height:1px;background:#7a9cbc"></div><div class="r" style="left:1px;top:779px;width:36px;height:1px;background:#b4b4b4"></div><div class="r" style="left:38px;top:803px;width:1856px;height:1px;background:#7ea3cf"></div><div class="r" style="left:190px;top:803px;width:249px;height:1px;background:#7a9cbc"></div><div class="r" style="left:1px;top:803px;width:36px;height:1px;background:#b4b4b4"></div><div class="r" style="left:38px;top:826px;width:1856px;height:1px;background:#7ea3cf"></div><div class="r" style="left:190px;top:826px;width:249px;height:1px;background:#7a9cbc"></div><div class="r" style="left:1px;top:826px;width:36px;height:1px;background:#b4b4b4"></div><div class="r" style="left:38px;top:849px;width:1856px;height:1px;background:#7ea3cf"></div><div class="r" style="left:190px;top:849px;width:249px;height:1px;background:#7a9cbc"></div><div class="r" style="left:1px;top:849px;width:36px;height:1px;background:#b4b4b4"></div><div class="r" style="left:38px;top:873px;width:1856px;height:1px;background:#7ea3cf"></div><div class="r" style="left:190px;top:873px;width:249px;height:1px;background:#7a9cbc"></div><div class="r" style="left:1px;top:873px;width:36px;height:1px;background:#b4b4b4"></div><div class="r" style="left:36px;top:219px;width:2px;height:660px;background:#217346"></div><div class="r" style="left:189px;top:219px;width:251px;height:1.5px;background:#217346"></div><div class="r" style="left:189px;top:219px;width:2px;height:660px;background:#217346"></div><div class="r" style="left:438px;top:219px;width:2px;height:660px;background:#217346"></div><div class="r" style="left:435px;top:219px;width:6px;height:5px;background:#217346"></div><div class="t" style="left:-480.5px;width:1000px;text-align:center;top:224.38px;font-size:15.5px;line-height:15.5px;color:#1d6139;font-weight:normal;letter-spacing:0.6px">1</div><div class="t" style="left:-480.5px;width:1000px;text-align:center;top:247.38px;font-size:15.5px;line-height:15.5px;color:#1d6139;font-weight:normal;letter-spacing:0.6px">14</div><div class="t" style="left:41.90px;top:247.38px;font-size:15.5px;line-height:15.5px;color:#000000;font-weight:normal;letter-spacing:0.338px;">Small Business</div><div class="t" style="left:192.80px;top:247.38px;font-size:15.5px;line-height:15.5px;color:#000000;font-weight:normal;letter-spacing:1.385px;">Mexico</div><div class="t" style="left:448.20px;top:247.38px;font-size:15.5px;line-height:15.5px;color:#000000;font-weight:normal;letter-spacing:1.333px;">Montana</div><div class="t" style="left:580.40px;top:247.38px;font-size:15.5px;line-height:15.5px;color:#000000;font-weight:normal;letter-spacing:1.489px;">None</div><div class="t" style="left:835.95px;top:247.76px;font-size:16px;line-height:16px;color:#000000;font-weight:normal;letter-spacing:0.527px;">958</div><div class="t" style="left:878.30px;top:247.38px;font-size:15.5px;line-height:15.5px;color:#000000;font-weight:normal;">$</div><div class="t" style="left:956.95px;top:247.76px;font-size:16px;line-height:16px;color:#000000;font-weight:normal;letter-spacing:0.936px;">5.00</div><div class="t" style="left:1011.00px;top:247.38px;font-size:15.5px;line-height:15.5px;color:#000000;font-weight:normal;">$</div><div class="t" style="left:1054.55px;top:247.76px;font-size:16px;line-height:16px;color:#000000;font-weight:normal;letter-spacing:0.782px;">300.00</div><div class="t" style="left:1127.50px;top:247.38px;font-size:15.5px;line-height:15.5px;color:#000000;font-weight:normal;">$</div><div class="t" style="left:1148.60px;top:247.76px;font-size:16px;line-height:16px;color:#000000;font-weight:normal;letter-spacing:0.908px;">2,87,400.00</div><div class="t" style="left:1263.10px;top:247.38px;font-size:15.5px;line-height:15.5px;color:#000000;font-weight:normal;">$</div><div class="t" style="left:1335.30px;top:247.38px;font-size:15.5px;line-height:15.5px;color:#000000;font-weight:normal;">-</div><div class="t" style="left:1380.40px;top:247.38px;font-size:15.5px;line-height:15.5px;color:#000000;font-weight:normal;">$</div><div class="t" style="left:1432.00px;top:247.76px;font-size:16px;line-height:16px;color:#000000;font-weight:normal;letter-spacing:0.908px;">2,87,400.00</div><div class="t" style="left:1789.00px;top:247.76px;font-size:16px;line-height:16px;color:#000000;font-weight:normal;letter-spacing:0.502px;">00</div><div class="r" style="left:1818px;top:244px;width:76px;height:23px;overflow:hidden"><div class="t" style="left:12.70px;top:2.96px;font-size:16px;line-height:16px;color:#000000;font-weight:normal;letter-spacing:0.9px">01-08-20</div></div><div class="t" style="left:-480.5px;width:1000px;text-align:center;top:270.38px;font-size:15.5px;line-height:15.5px;color:#1d6139;font-weight:normal;letter-spacing:0.6px">15</div><div class="t" style="left:41.90px;top:270.38px;font-size:15.5px;line-height:15.5px;color:#000000;font-weight:normal;letter-spacing:1.091px;">Government</div><div class="t" style="left:193.80px;top:270.38px;font-size:15.5px;line-height:15.5px;color:#000000;font-weight:normal;letter-spacing:1.102px;">Germany</div><div class="t" style="left:448.20px;top:270.38px;font-size:15.5px;line-height:15.5px;color:#000000;font-weight:normal;letter-spacing:1.333px;">Montana</div><div class="t" style="left:580.40px;top:270.38px;font-size:15.5px;line-height:15.5px;color:#000000;font-weight:normal;letter-spacing:1.489px;">None</div><div class="t" style="left:826.50px;top:270.76px;font-size:16px;line-height:16px;color:#000000;font-weight:normal;letter-spacing:0.535px;">2146</div><div class="t" style="left:878.30px;top:270.38px;font-size:15.5px;line-height:15.5px;color:#000000;font-weight:normal;">$</div><div class="t" style="left:956.95px;top:270.76px;font-size:16px;line-height:16px;color:#000000;font-weight:normal;letter-spacing:0.936px;">5.00</div><div class="t" style="left:1011.00px;top:270.38px;font-size:15.5px;line-height:15.5px;color:#000000;font-weight:normal;">$</div><div class="t" style="left:1073.45px;top:270.76px;font-size:16px;line-height:16px;color:#000000;font-weight:normal;letter-spacing:0.936px;">7.00</div><div class="t" style="left:1127.50px;top:270.38px;font-size:15.5px;line-height:15.5px;color:#000000;font-weight:normal;">$</div><div class="t" style="left:1163.25px;top:270.76px;font-size:16px;line-height:16px;color:#000000;font-weight:normal;letter-spacing:0.971px;">15,022.00</div><div class="t" style="left:1263.10px;top:270.38px;font-size:15.5px;line-height:15.5px;color:#000000;font-weight:normal;">$</div><div class="t" style="left:1335.30px;top:270.38px;font-size:15.5px;line-height:15.5px;color:#000000;font-weight:normal;">-</div><div class="t" style="left:1380.40px;top:270.38px;font-size:15.5px;line-height:15.5px;color:#000000;font-weight:normal;">$</div><div class="t" style="left:1446.65px;top:270.76px;font-size:16px;line-height:16px;color:#000000;font-weight:normal;letter-spacing:0.971px;">15,022.00</div><div class="t" style="left:1789.00px;top:270.76px;font-size:16px;line-height:16px;color:#000000;font-weight:normal;letter-spacing:0.502px;">00</div><div class="r" style="left:1818px;top:267px;width:76px;height:23px;overflow:hidden"><div class="t" style="left:12.70px;top:2.96px;font-size:16px;line-height:16px;color:#000000;font-weight:normal;letter-spacing:0.9px">01-09-20</div></div><div class="t" style="left:-480.5px;width:1000px;text-align:center;top:294.38px;font-size:15.5px;line-height:15.5px;color:#1d6139;font-weight:normal;letter-spacing:0.6px">16</div><div class="t" style="left:40.90px;top:294.38px;font-size:15.5px;line-height:15.5px;color:#000000;font-weight:normal;letter-spacing:0.942px;">Enterprise</div><div class="t" style="left:193.80px;top:294.38px;font-size:15.5px;line-height:15.5px;color:#000000;font-weight:normal;letter-spacing:0.325px;">Canada</div><div class="t" style="left:448.20px;top:294.38px;font-size:15.5px;line-height:15.5px;color:#000000;font-weight:normal;letter-spacing:1.333px;">Montana</div><div class="t" style="left:580.40px;top:294.38px;font-size:15.5px;line-height:15.5px;color:#000000;font-weight:normal;letter-spacing:1.489px;">None</div><div class="t" style="left:835.95px;top:294.76px;font-size:16px;line-height:16px;color:#000000;font-weight:normal;letter-spacing:0.527px;">345</div><div class="t" style="left:878.30px;top:294.38px;font-size:15.5px;line-height:15.5px;color:#000000;font-weight:normal;">$</div><div class="t" style="left:956.95px;top:294.76px;font-size:16px;line-height:16px;color:#000000;font-weight:normal;letter-spacing:0.936px;">5.00</div><div class="t" style="left:1011.00px;top:294.38px;font-size:15.5px;line-height:15.5px;color:#000000;font-weight:normal;">$</div><div class="t" style="left:1053.55px;top:294.76px;font-size:16px;line-height:16px;color:#000000;font-weight:normal;letter-spacing:0.982px;">125.00</div><div class="t" style="left:1127.50px;top:294.38px;font-size:15.5px;line-height:15.5px;color:#000000;font-weight:normal;">$</div><div class="t" style="left:1164.25px;top:294.76px;font-size:16px;line-height:16px;color:#000000;font-weight:normal;letter-spacing:0.846px;">43,125.00</div><div class="t" style="left:1263.10px;top:294.38px;font-size:15.5px;line-height:15.5px;color:#000000;font-weight:normal;">$</div><div class="t" style="left:1335.30px;top:294.38px;font-size:15.5px;line-height:15.5px;color:#000000;font-weight:normal;">-</div><div class="t" style="left:1380.40px;top:294.38px;font-size:15.5px;line-height:15.5px;color:#000000;font-weight:normal;">$</div><div class="t" style="left:1447.65px;top:294.76px;font-size:16px;line-height:16px;color:#000000;font-weight:normal;letter-spacing:0.846px;">43,125.00</div><div class="t" style="left:1789.00px;top:294.76px;font-size:16px;line-height:16px;color:#000000;font-weight:normal;letter-spacing:0.502px;">00</div><div class="r" style="left:1818px;top:290px;width:76px;height:23px;overflow:hidden"><div class="t" style="left:12.70px;top:3.96px;font-size:16px;line-height:16px;color:#000000;font-weight:normal;letter-spacing:0.9px">01-10-20</div></div><div class="t" style="left:-480.5px;width:1000px;text-align:center;top:317.38px;font-size:15.5px;line-height:15.5px;color:#1d6139;font-weight:normal;letter-spacing:0.6px">17</div><div class="t" style="left:40.90px;top:317.38px;font-size:15.5px;line-height:15.5px;color:#000000;font-weight:normal;letter-spacing:1.520px;">Midmarket</div><div class="t" style="left:192.80px;top:317.38px;font-size:15.5px;line-height:15.5px;color:#000000;font-weight:normal;letter-spacing:0.760px;">United States of America</div><div class="t" style="left:448.20px;top:317.38px;font-size:15.5px;line-height:15.5px;color:#000000;font-weight:normal;letter-spacing:1.333px;">Montana</div><div class="t" style="left:580.40px;top:317.38px;font-size:15.5px;line-height:15.5px;color:#000000;font-weight:normal;letter-spacing:1.489px;">None</div><div class="t" style="left:835.95px;top:317.76px;font-size:16px;line-height:16px;color:#000000;font-weight:normal;letter-spacing:0.527px;">615</div><div class="t" style="left:878.30px;top:317.38px;font-size:15.5px;line-height:15.5px;color:#000000;font-weight:normal;">$</div><div class="t" style="left:956.95px;top:317.76px;font-size:16px;line-height:16px;color:#000000;font-weight:normal;letter-spacing:0.936px;">5.00</div><div class="t" style="left:1011.00px;top:317.38px;font-size:15.5px;line-height:15.5px;color:#000000;font-weight:normal;">$</div><div class="t" style="left:1063.00px;top:317.76px;font-size:16px;line-height:16px;color:#000000;font-weight:normal;letter-spacing:1.090px;">15.00</div><div class="t" style="left:1127.50px;top:317.38px;font-size:15.5px;line-height:15.5px;color:#000000;font-weight:normal;">$</div><div class="t" style="left:1173.70px;top:317.76px;font-size:16px;line-height:16px;color:#000000;font-weight:normal;letter-spacing:0.888px;">9,225.00</div><div class="t" style="left:1263.10px;top:317.38px;font-size:15.5px;line-height:15.5px;color:#000000;font-weight:normal;">$</div><div class="t" style="left:1335.30px;top:317.38px;font-size:15.5px;line-height:15.5px;color:#000000;font-weight:normal;">-</div><div class="t" style="left:1380.40px;top:317.38px;font-size:15.5px;line-height:15.5px;color:#000000;font-weight:normal;">$</div><div class="t" style="left:1457.10px;top:317.76px;font-size:16px;line-height:16px;color:#000000;font-weight:normal;letter-spacing:0.888px;">9,225.00</div><div class="t" style="left:1789.00px;top:317.76px;font-size:16px;line-height:16px;color:#000000;font-weight:normal;letter-spacing:0.502px;">00</div><div class="r" style="left:1818px;top:314px;width:76px;height:23px;overflow:hidden"><div class="t" style="left:12.70px;top:2.96px;font-size:16px;line-height:16px;color:#000000;font-weight:normal;letter-spacing:0.9px">01-12-20</div></div><div class="t" style="left:-480.5px;width:1000px;text-align:center;top:340.38px;font-size:15.5px;line-height:15.5px;color:#1d6139;font-weight:normal;letter-spacing:0.6px">18</div><div class="t" style="left:41.90px;top:340.38px;font-size:15.5px;line-height:15.5px;color:#000000;font-weight:normal;letter-spacing:1.091px;">Government</div><div class="t" style="left:193.80px;top:340.38px;font-size:15.5px;line-height:15.5px;color:#000000;font-weight:normal;letter-spacing:0.325px;">Canada</div><div class="t" style="left:448.20px;top:340.38px;font-size:15.5px;line-height:15.5px;color:#000000;font-weight:normal;letter-spacing:0.368px;">Paseo</div><div class="t" style="left:580.40px;top:340.38px;font-size:15.5px;line-height:15.5px;color:#000000;font-weight:normal;letter-spacing:1.489px;">None</div><div class="t" style="left:835.95px;top:340.76px;font-size:16px;line-height:16px;color:#000000;font-weight:normal;letter-spacing:0.527px;">292</div><div class="t" style="left:878.30px;top:340.38px;font-size:15.5px;line-height:15.5px;color:#000000;font-weight:normal;">$</div><div class="t" style="left:946.50px;top:340.76px;font-size:16px;line-height:16px;color:#000000;font-weight:normal;letter-spacing:1.090px;">10.00</div><div class="t" style="left:1011.00px;top:340.38px;font-size:15.5px;line-height:15.5px;color:#000000;font-weight:normal;">$</div><div class="t" style="left:1064.00px;top:340.76px;font-size:16px;line-height:16px;color:#000000;font-weight:normal;letter-spacing:0.840px;">20.00</div><div class="t" style="left:1127.50px;top:340.38px;font-size:15.5px;line-height:15.5px;color:#000000;font-weight:normal;">$</div><div class="t" style="left:1173.70px;top:340.76px;font-size:16px;line-height:16px;color:#000000;font-weight:normal;letter-spacing:0.888px;">5,840.00</div><div class="t" style="left:1263.10px;top:340.38px;font-size:15.5px;line-height:15.5px;color:#000000;font-weight:normal;">$</div><div class="t" style="left:1335.30px;top:340.38px;font-size:15.5px;line-height:15.5px;color:#000000;font-weight:normal;">-</div><div class="t" style="left:1380.40px;top:340.38px;font-size:15.5px;line-height:15.5px;color:#000000;font-weight:normal;">$</div><div class="t" style="left:1457.10px;top:340.76px;font-size:16px;line-height:16px;color:#000000;font-weight:normal;letter-spacing:0.888px;">5,840.00</div><div class="t" style="left:1789.00px;top:340.76px;font-size:16px;line-height:16px;color:#000000;font-weight:normal;letter-spacing:0.502px;">00</div><div class="r" style="left:1818px;top:337px;width:76px;height:23px;overflow:hidden"><div class="t" style="left:12.70px;top:2.96px;font-size:16px;line-height:16px;color:#000000;font-weight:normal;letter-spacing:0.9px">01-02-20</div></div><div class="t" style="left:-480.5px;width:1000px;text-align:center;top:364.38px;font-size:15.5px;line-height:15.5px;color:#1d6139;font-weight:normal;letter-spacing:0.6px">19</div><div class="t" style="left:40.90px;top:364.38px;font-size:15.5px;line-height:15.5px;color:#000000;font-weight:normal;letter-spacing:1.520px;">Midmarket</div><div class="t" style="left:192.80px;top:364.38px;font-size:15.5px;line-height:15.5px;color:#000000;font-weight:normal;letter-spacing:1.385px;">Mexico</div><div class="t" style="left:448.20px;top:364.38px;font-size:15.5px;line-height:15.5px;color:#000000;font-weight:normal;letter-spacing:0.368px;">Paseo</div><div class="t" style="left:580.40px;top:364.38px;font-size:15.5px;line-height:15.5px;color:#000000;font-weight:normal;letter-spacing:1.489px;">None</div><div class="t" style="left:835.95px;top:364.76px;font-size:16px;line-height:16px;color:#000000;font-weight:normal;letter-spacing:0.527px;">974</div><div class="t" style="left:878.30px;top:364.38px;font-size:15.5px;line-height:15.5px;color:#000000;font-weight:normal;">$</div><div class="t" style="left:946.50px;top:364.76px;font-size:16px;line-height:16px;color:#000000;font-weight:normal;letter-spacing:1.090px;">10.00</div><div class="t" style="left:1011.00px;top:364.38px;font-size:15.5px;line-height:15.5px;color:#000000;font-weight:normal;">$</div><div class="t" style="left:1063.00px;top:364.76px;font-size:16px;line-height:16px;color:#000000;font-weight:normal;letter-spacing:1.090px;">15.00</div><div class="t" style="left:1127.50px;top:364.38px;font-size:15.5px;line-height:15.5px;color:#000000;font-weight:normal;">$</div><div class="t" style="left:1163.25px;top:364.76px;font-size:16px;line-height:16px;color:#000000;font-weight:normal;letter-spacing:0.971px;">14,610.00</div><div class="t" style="left:1263.10px;top:364.38px;font-size:15.5px;line-height:15.5px;color:#000000;font-weight:normal;">$</div><div class="t" style="left:1335.30px;top:364.38px;font-size:15.5px;line-height:15.5px;color:#000000;font-weight:normal;">-</div><div class="t" style="left:1380.40px;top:364.38px;font-size:15.5px;line-height:15.5px;color:#000000;font-weight:normal;">$</div><div class="t" style="left:1446.65px;top:364.76px;font-size:16px;line-height:16px;color:#000000;font-weight:normal;letter-spacing:0.971px;">14,610.00</div><div class="t" style="left:1789.00px;top:364.76px;font-size:16px;line-height:16px;color:#000000;font-weight:normal;letter-spacing:0.502px;">00</div><div class="r" style="left:1818px;top:360px;width:76px;height:23px;overflow:hidden"><div class="t" style="left:12.70px;top:3.96px;font-size:16px;line-height:16px;color:#000000;font-weight:normal;letter-spacing:0.9px">01-02-20</div></div><div class="t" style="left:-480.5px;width:1000px;text-align:center;top:387.38px;font-size:15.5px;line-height:15.5px;color:#1d6139;font-weight:normal;letter-spacing:0.6px">20</div><div class="t" style="left:41.90px;top:387.38px;font-size:15.5px;line-height:15.5px;color:#000000;font-weight:normal;letter-spacing:0.642px;">Channel Partners</div><div class="t" style="left:193.80px;top:387.38px;font-size:15.5px;line-height:15.5px;color:#000000;font-weight:normal;letter-spacing:0.325px;">Canada</div><div class="t" style="left:448.20px;top:387.38px;font-size:15.5px;line-height:15.5px;color:#000000;font-weight:normal;letter-spacing:0.368px;">Paseo</div><div class="t" style="left:580.40px;top:387.38px;font-size:15.5px;line-height:15.5px;color:#000000;font-weight:normal;letter-spacing:1.489px;">None</div><div class="t" style="left:826.50px;top:387.76px;font-size:16px;line-height:16px;color:#000000;font-weight:normal;letter-spacing:0.535px;">2518</div><div class="t" style="left:878.30px;top:387.38px;font-size:15.5px;line-height:15.5px;color:#000000;font-weight:normal;">$</div><div class="t" style="left:946.50px;top:387.76px;font-size:16px;line-height:16px;color:#000000;font-weight:normal;letter-spacing:1.090px;">10.00</div><div class="t" style="left:1011.00px;top:387.38px;font-size:15.5px;line-height:15.5px;color:#000000;font-weight:normal;">$</div><div class="t" style="left:1063.00px;top:387.76px;font-size:16px;line-height:16px;color:#000000;font-weight:normal;letter-spacing:1.090px;">12.00</div><div class="t" style="left:1127.50px;top:387.38px;font-size:15.5px;line-height:15.5px;color:#000000;font-weight:normal;">$</div><div class="t" style="left:1164.25px;top:387.76px;font-size:16px;line-height:16px;color:#000000;font-weight:normal;letter-spacing:0.846px;">30,216.00</div><div class="t" style="left:1263.10px;top:387.38px;font-size:15.5px;line-height:15.5px;color:#000000;font-weight:normal;">$</div><div class="t" style="left:1335.30px;top:387.38px;font-size:15.5px;line-height:15.5px;color:#000000;font-weight:normal;">-</div><div class="t" style="left:1380.40px;top:387.38px;font-size:15.5px;line-height:15.5px;color:#000000;font-weight:normal;">$</div><div class="t" style="left:1447.65px;top:387.76px;font-size:16px;line-height:16px;color:#000000;font-weight:normal;letter-spacing:0.846px;">30,216.00</div><div class="t" style="left:1789.00px;top:387.76px;font-size:16px;line-height:16px;color:#000000;font-weight:normal;letter-spacing:0.502px;">00</div><div class="r" style="left:1818px;top:384px;width:76px;height:23px;overflow:hidden"><div class="t" style="left:12.70px;top:2.96px;font-size:16px;line-height:16px;color:#000000;font-weight:normal;letter-spacing:0.9px">01-06-20</div></div><div class="t" style="left:-480.5px;width:1000px;text-align:center;top:410.38px;font-size:15.5px;line-height:15.5px;color:#1d6139;font-weight:normal;letter-spacing:0.6px">21</div><div class="t" style="left:41.90px;top:410.38px;font-size:15.5px;line-height:15.5px;color:#000000;font-weight:normal;letter-spacing:1.091px;">Government</div><div class="t" style="left:193.80px;top:410.38px;font-size:15.5px;line-height:15.5px;color:#000000;font-weight:normal;letter-spacing:1.102px;">Germany</div><div class="t" style="left:448.20px;top:410.38px;font-size:15.5px;line-height:15.5px;color:#000000;font-weight:normal;letter-spacing:0.368px;">Paseo</div><div class="t" style="left:580.40px;top:410.38px;font-size:15.5px;line-height:15.5px;color:#000000;font-weight:normal;letter-spacing:1.489px;">None</div><div class="t" style="left:825.50px;top:410.76px;font-size:16px;line-height:16px;color:#000000;font-weight:normal;letter-spacing:0.868px;">1006</div><div class="t" style="left:878.30px;top:410.38px;font-size:15.5px;line-height:15.5px;color:#000000;font-weight:normal;">$</div><div class="t" style="left:946.50px;top:410.76px;font-size:16px;line-height:16px;color:#000000;font-weight:normal;letter-spacing:1.090px;">10.00</div><div class="t" style="left:1011.00px;top:410.38px;font-size:15.5px;line-height:15.5px;color:#000000;font-weight:normal;">$</div><div class="t" style="left:1054.55px;top:410.76px;font-size:16px;line-height:16px;color:#000000;font-weight:normal;letter-spacing:0.782px;">350.00</div><div class="t" style="left:1127.50px;top:410.38px;font-size:15.5px;line-height:15.5px;color:#000000;font-weight:normal;">$</div><div class="t" style="left:1148.60px;top:410.76px;font-size:16px;line-height:16px;color:#000000;font-weight:normal;letter-spacing:0.908px;">3,52,100.00</div><div class="t" style="left:1263.10px;top:410.38px;font-size:15.5px;line-height:15.5px;color:#000000;font-weight:normal;">$</div><div class="t" style="left:1335.30px;top:410.38px;font-size:15.5px;line-height:15.5px;color:#000000;font-weight:normal;">-</div><div class="t" style="left:1380.40px;top:410.38px;font-size:15.5px;line-height:15.5px;color:#000000;font-weight:normal;">$</div><div class="t" style="left:1432.00px;top:410.76px;font-size:16px;line-height:16px;color:#000000;font-weight:normal;letter-spacing:0.908px;">3,52,100.00</div><div class="t" style="left:1789.00px;top:410.76px;font-size:16px;line-height:16px;color:#000000;font-weight:normal;letter-spacing:0.502px;">00</div><div class="r" style="left:1818px;top:407px;width:76px;height:23px;overflow:hidden"><div class="t" style="left:12.70px;top:2.96px;font-size:16px;line-height:16px;color:#000000;font-weight:normal;letter-spacing:0.9px">01-06-20</div></div><div class="t" style="left:-480.5px;width:1000px;text-align:center;top:434.38px;font-size:15.5px;line-height:15.5px;color:#1d6139;font-weight:normal;letter-spacing:0.6px">22</div><div class="t" style="left:41.90px;top:434.38px;font-size:15.5px;line-height:15.5px;color:#000000;font-weight:normal;letter-spacing:0.642px;">Channel Partners</div><div class="t" style="left:193.80px;top:434.38px;font-size:15.5px;line-height:15.5px;color:#000000;font-weight:normal;letter-spacing:1.102px;">Germany</div><div class="t" style="left:448.20px;top:434.38px;font-size:15.5px;line-height:15.5px;color:#000000;font-weight:normal;letter-spacing:0.368px;">Paseo</div><div class="t" style="left:580.40px;top:434.38px;font-size:15.5px;line-height:15.5px;color:#000000;font-weight:normal;letter-spacing:1.489px;">None</div><div class="t" style="left:835.95px;top:434.76px;font-size:16px;line-height:16px;color:#000000;font-weight:normal;letter-spacing:0.527px;">367</div><div class="t" style="left:878.30px;top:434.38px;font-size:15.5px;line-height:15.5px;color:#000000;font-weight:normal;">$</div><div class="t" style="left:946.50px;top:434.76px;font-size:16px;line-height:16px;color:#000000;font-weight:normal;letter-spacing:1.090px;">10.00</div><div class="t" style="left:1011.00px;top:434.38px;font-size:15.5px;line-height:15.5px;color:#000000;font-weight:normal;">$</div><div class="t" style="left:1063.00px;top:434.76px;font-size:16px;line-height:16px;color:#000000;font-weight:normal;letter-spacing:1.090px;">12.00</div><div class="t" style="left:1127.50px;top:434.38px;font-size:15.5px;line-height:15.5px;color:#000000;font-weight:normal;">$</div><div class="t" style="left:1173.70px;top:434.76px;font-size:16px;line-height:16px;color:#000000;font-weight:normal;letter-spacing:0.888px;">4,404.00</div><div class="t" style="left:1263.10px;top:434.38px;font-size:15.5px;line-height:15.5px;color:#000000;font-weight:normal;">$</div><div class="t" style="left:1335.30px;top:434.38px;font-size:15.5px;line-height:15.5px;color:#000000;font-weight:normal;">-</div><div class="t" style="left:1380.40px;top:434.38px;font-size:15.5px;line-height:15.5px;color:#000000;font-weight:normal;">$</div><div class="t" style="left:1457.10px;top:434.76px;font-size:16px;line-height:16px;color:#000000;font-weight:normal;letter-spacing:0.888px;">4,404.00</div><div class="t" style="left:1789.00px;top:434.76px;font-size:16px;line-height:16px;color:#000000;font-weight:normal;letter-spacing:0.502px;">00</div><div class="r" style="left:1818px;top:430px;width:76px;height:23px;overflow:hidden"><div class="t" style="left:12.70px;top:3.96px;font-size:16px;line-height:16px;color:#000000;font-weight:normal;letter-spacing:0.9px">01-07-20</div></div><div class="t" style="left:-480.5px;width:1000px;text-align:center;top:457.38px;font-size:15.5px;line-height:15.5px;color:#1d6139;font-weight:normal;letter-spacing:0.6px">23</div><div class="t" style="left:41.90px;top:457.38px;font-size:15.5px;line-height:15.5px;color:#000000;font-weight:normal;letter-spacing:1.091px;">Government</div><div class="t" style="left:192.80px;top:457.38px;font-size:15.5px;line-height:15.5px;color:#000000;font-weight:normal;letter-spacing:1.385px;">Mexico</div><div class="t" style="left:448.20px;top:457.38px;font-size:15.5px;line-height:15.5px;color:#000000;font-weight:normal;letter-spacing:0.368px;">Paseo</div><div class="t" style="left:580.40px;top:457.38px;font-size:15.5px;line-height:15.5px;color:#000000;font-weight:normal;letter-spacing:1.489px;">None</div><div class="t" style="left:835.95px;top:457.76px;font-size:16px;line-height:16px;color:#000000;font-weight:normal;letter-spacing:0.527px;">883</div><div class="t" style="left:878.30px;top:457.38px;font-size:15.5px;line-height:15.5px;color:#000000;font-weight:normal;">$</div><div class="t" style="left:946.50px;top:457.76px;font-size:16px;line-height:16px;color:#000000;font-weight:normal;letter-spacing:1.090px;">10.00</div><div class="t" style="left:1011.00px;top:457.38px;font-size:15.5px;line-height:15.5px;color:#000000;font-weight:normal;">$</div><div class="t" style="left:1073.45px;top:457.76px;font-size:16px;line-height:16px;color:#000000;font-weight:normal;letter-spacing:0.936px;">7.00</div><div class="t" style="left:1127.50px;top:457.38px;font-size:15.5px;line-height:15.5px;color:#000000;font-weight:normal;">$</div><div class="t" style="left:1173.70px;top:457.76px;font-size:16px;line-height:16px;color:#000000;font-weight:normal;letter-spacing:0.888px;">6,181.00</div><div class="t" style="left:1263.10px;top:457.38px;font-size:15.5px;line-height:15.5px;color:#000000;font-weight:normal;">$</div><div class="t" style="left:1335.30px;top:457.38px;font-size:15.5px;line-height:15.5px;color:#000000;font-weight:normal;">-</div><div class="t" style="left:1380.40px;top:457.38px;font-size:15.5px;line-height:15.5px;color:#000000;font-weight:normal;">$</div><div class="t" style="left:1457.10px;top:457.76px;font-size:16px;line-height:16px;color:#000000;font-weight:normal;letter-spacing:0.888px;">6,181.00</div><div class="t" style="left:1789.00px;top:457.76px;font-size:16px;line-height:16px;color:#000000;font-weight:normal;letter-spacing:0.502px;">00</div><div class="r" style="left:1818px;top:454px;width:76px;height:23px;overflow:hidden"><div class="t" style="left:12.70px;top:2.96px;font-size:16px;line-height:16px;color:#000000;font-weight:normal;letter-spacing:0.9px">01-08-20</div></div><div class="t" style="left:-480.5px;width:1000px;text-align:center;top:480.38px;font-size:15.5px;line-height:15.5px;color:#1d6139;font-weight:normal;letter-spacing:0.6px">24</div><div class="t" style="left:40.90px;top:480.38px;font-size:15.5px;line-height:15.5px;color:#000000;font-weight:normal;letter-spacing:1.520px;">Midmarket</div><div class="t" style="left:192.80px;top:480.38px;font-size:15.5px;line-height:15.5px;color:#000000;font-weight:normal;letter-spacing:0.916px;">France</div><div class="t" style="left:448.20px;top:480.38px;font-size:15.5px;line-height:15.5px;color:#000000;font-weight:normal;letter-spacing:0.368px;">Paseo</div><div class="t" style="left:580.40px;top:480.38px;font-size:15.5px;line-height:15.5px;color:#000000;font-weight:normal;letter-spacing:1.489px;">None</div><div class="t" style="left:835.95px;top:480.76px;font-size:16px;line-height:16px;color:#000000;font-weight:normal;letter-spacing:0.527px;">549</div><div class="t" style="left:878.30px;top:480.38px;font-size:15.5px;line-height:15.5px;color:#000000;font-weight:normal;">$</div><div class="t" style="left:946.50px;top:480.76px;font-size:16px;line-height:16px;color:#000000;font-weight:normal;letter-spacing:1.090px;">10.00</div><div class="t" style="left:1011.00px;top:480.38px;font-size:15.5px;line-height:15.5px;color:#000000;font-weight:normal;">$</div><div class="t" style="left:1063.00px;top:480.76px;font-size:16px;line-height:16px;color:#000000;font-weight:normal;letter-spacing:1.090px;">15.00</div><div class="t" style="left:1127.50px;top:480.38px;font-size:15.5px;line-height:15.5px;color:#000000;font-weight:normal;">$</div><div class="t" style="left:1173.70px;top:480.76px;font-size:16px;line-height:16px;color:#000000;font-weight:normal;letter-spacing:0.888px;">8,235.00</div><div class="t" style="left:1263.10px;top:480.38px;font-size:15.5px;line-height:15.5px;color:#000000;font-weight:normal;">$</div><div class="t" style="left:1335.30px;top:480.38px;font-size:15.5px;line-height:15.5px;color:#000000;font-weight:normal;">-</div><div class="t" style="left:1380.40px;top:480.38px;font-size:15.5px;line-height:15.5px;color:#000000;font-weight:normal;">$</div><div class="t" style="left:1457.10px;top:480.76px;font-size:16px;line-height:16px;color:#000000;font-weight:normal;letter-spacing:0.888px;">8,235.00</div><div class="t" style="left:1789.00px;top:480.76px;font-size:16px;line-height:16px;color:#000000;font-weight:normal;letter-spacing:0.502px;">00</div><div class="r" style="left:1818px;top:477px;width:76px;height:23px;overflow:hidden"><div class="t" style="left:12.70px;top:2.96px;font-size:16px;line-height:16px;color:#000000;font-weight:normal;letter-spacing:0.9px">01-09-20</div></div><div class="t" style="left:-480.5px;width:1000px;text-align:center;top:504.38px;font-size:15.5px;line-height:15.5px;color:#1d6139;font-weight:normal;letter-spacing:0.6px">25</div><div class="t" style="left:41.90px;top:504.38px;font-size:15.5px;line-height:15.5px;color:#000000;font-weight:normal;letter-spacing:0.338px;">Small Business</div><div class="t" style="left:192.80px;top:504.38px;font-size:15.5px;line-height:15.5px;color:#000000;font-weight:normal;letter-spacing:1.385px;">Mexico</div><div class="t" style="left:448.20px;top:504.38px;font-size:15.5px;line-height:15.5px;color:#000000;font-weight:normal;letter-spacing:0.368px;">Paseo</div><div class="t" style="left:580.40px;top:504.38px;font-size:15.5px;line-height:15.5px;color:#000000;font-weight:normal;letter-spacing:1.489px;">None</div><div class="t" style="left:835.95px;top:504.76px;font-size:16px;line-height:16px;color:#000000;font-weight:normal;letter-spacing:0.527px;">788</div><div class="t" style="left:878.30px;top:504.38px;font-size:15.5px;line-height:15.5px;color:#000000;font-weight:normal;">$</div><div class="t" style="left:946.50px;top:504.76px;font-size:16px;line-height:16px;color:#000000;font-weight:normal;letter-spacing:1.090px;">10.00</div><div class="t" style="left:1011.00px;top:504.38px;font-size:15.5px;line-height:15.5px;color:#000000;font-weight:normal;">$</div><div class="t" style="left:1054.55px;top:504.76px;font-size:16px;line-height:16px;color:#000000;font-weight:normal;letter-spacing:0.782px;">300.00</div><div class="t" style="left:1127.50px;top:504.38px;font-size:15.5px;line-height:15.5px;color:#000000;font-weight:normal;">$</div><div class="t" style="left:1148.60px;top:504.76px;font-size:16px;line-height:16px;color:#000000;font-weight:normal;letter-spacing:0.908px;">2,36,400.00</div><div class="t" style="left:1263.10px;top:504.38px;font-size:15.5px;line-height:15.5px;color:#000000;font-weight:normal;">$</div><div class="t" style="left:1335.30px;top:504.38px;font-size:15.5px;line-height:15.5px;color:#000000;font-weight:normal;">-</div><div class="t" style="left:1380.40px;top:504.38px;font-size:15.5px;line-height:15.5px;color:#000000;font-weight:normal;">$</div><div class="t" style="left:1432.00px;top:504.76px;font-size:16px;line-height:16px;color:#000000;font-weight:normal;letter-spacing:0.908px;">2,36,400.00</div><div class="t" style="left:1789.00px;top:504.76px;font-size:16px;line-height:16px;color:#000000;font-weight:normal;letter-spacing:0.502px;">00</div><div class="r" style="left:1818px;top:500px;width:76px;height:23px;overflow:hidden"><div class="t" style="left:12.70px;top:3.96px;font-size:16px;line-height:16px;color:#000000;font-weight:normal;letter-spacing:0.9px">01-09-20</div></div><div class="t" style="left:-480.5px;width:1000px;text-align:center;top:527.38px;font-size:15.5px;line-height:15.5px;color:#1d6139;font-weight:normal;letter-spacing:0.6px">26</div><div class="t" style="left:40.90px;top:527.38px;font-size:15.5px;line-height:15.5px;color:#000000;font-weight:normal;letter-spacing:1.520px;">Midmarket</div><div class="t" style="left:192.80px;top:527.38px;font-size:15.5px;line-height:15.5px;color:#000000;font-weight:normal;letter-spacing:1.385px;">Mexico</div><div class="t" style="left:448.20px;top:527.38px;font-size:15.5px;line-height:15.5px;color:#000000;font-weight:normal;letter-spacing:0.368px;">Paseo</div><div class="t" style="left:580.40px;top:527.38px;font-size:15.5px;line-height:15.5px;color:#000000;font-weight:normal;letter-spacing:1.489px;">None</div><div class="t" style="left:826.50px;top:527.76px;font-size:16px;line-height:16px;color:#000000;font-weight:normal;letter-spacing:0.535px;">2472</div><div class="t" style="left:878.30px;top:527.38px;font-size:15.5px;line-height:15.5px;color:#000000;font-weight:normal;">$</div><div class="t" style="left:946.50px;top:527.76px;font-size:16px;line-height:16px;color:#000000;font-weight:normal;letter-spacing:1.090px;">10.00</div><div class="t" style="left:1011.00px;top:527.38px;font-size:15.5px;line-height:15.5px;color:#000000;font-weight:normal;">$</div><div class="t" style="left:1063.00px;top:527.76px;font-size:16px;line-height:16px;color:#000000;font-weight:normal;letter-spacing:1.090px;">15.00</div><div class="t" style="left:1127.50px;top:527.38px;font-size:15.5px;line-height:15.5px;color:#000000;font-weight:normal;">$</div><div class="t" style="left:1164.25px;top:527.76px;font-size:16px;line-height:16px;color:#000000;font-weight:normal;letter-spacing:0.846px;">37,080.00</div><div class="t" style="left:1263.10px;top:527.38px;font-size:15.5px;line-height:15.5px;color:#000000;font-weight:normal;">$</div><div class="t" style="left:1335.30px;top:527.38px;font-size:15.5px;line-height:15.5px;color:#000000;font-weight:normal;">-</div><div class="t" style="left:1380.40px;top:527.38px;font-size:15.5px;line-height:15.5px;color:#000000;font-weight:normal;">$</div><div class="t" style="left:1447.65px;top:527.76px;font-size:16px;line-height:16px;color:#000000;font-weight:normal;letter-spacing:0.846px;">37,080.00</div><div class="t" style="left:1789.00px;top:527.76px;font-size:16px;line-height:16px;color:#000000;font-weight:normal;letter-spacing:0.502px;">00</div><div class="r" style="left:1818px;top:524px;width:76px;height:23px;overflow:hidden"><div class="t" style="left:12.70px;top:2.96px;font-size:16px;line-height:16px;color:#000000;font-weight:normal;letter-spacing:0.9px">01-09-20</div></div><div class="t" style="left:-480.5px;width:1000px;text-align:center;top:550.38px;font-size:15.5px;line-height:15.5px;color:#1d6139;font-weight:normal;letter-spacing:0.6px">27</div><div class="t" style="left:41.90px;top:550.38px;font-size:15.5px;line-height:15.5px;color:#000000;font-weight:normal;letter-spacing:1.091px;">Government</div><div class="t" style="left:192.80px;top:550.38px;font-size:15.5px;line-height:15.5px;color:#000000;font-weight:normal;letter-spacing:0.760px;">United States of America</div><div class="t" style="left:448.20px;top:550.38px;font-size:15.5px;line-height:15.5px;color:#000000;font-weight:normal;letter-spacing:0.368px;">Paseo</div><div class="t" style="left:580.40px;top:550.38px;font-size:15.5px;line-height:15.5px;color:#000000;font-weight:normal;letter-spacing:1.489px;">None</div><div class="t" style="left:825.50px;top:550.76px;font-size:16px;line-height:16px;color:#000000;font-weight:normal;letter-spacing:1.264px;">1143</div><div class="t" style="left:878.30px;top:550.38px;font-size:15.5px;line-height:15.5px;color:#000000;font-weight:normal;">$</div><div class="t" style="left:946.50px;top:550.76px;font-size:16px;line-height:16px;color:#000000;font-weight:normal;letter-spacing:1.090px;">10.00</div><div class="t" style="left:1011.00px;top:550.38px;font-size:15.5px;line-height:15.5px;color:#000000;font-weight:normal;">$</div><div class="t" style="left:1073.45px;top:550.76px;font-size:16px;line-height:16px;color:#000000;font-weight:normal;letter-spacing:0.936px;">7.00</div><div class="t" style="left:1127.50px;top:550.38px;font-size:15.5px;line-height:15.5px;color:#000000;font-weight:normal;">$</div><div class="t" style="left:1173.70px;top:550.76px;font-size:16px;line-height:16px;color:#000000;font-weight:normal;letter-spacing:0.888px;">8,001.00</div><div class="t" style="left:1263.10px;top:550.38px;font-size:15.5px;line-height:15.5px;color:#000000;font-weight:normal;">$</div><div class="t" style="left:1335.30px;top:550.38px;font-size:15.5px;line-height:15.5px;color:#000000;font-weight:normal;">-</div><div class="t" style="left:1380.40px;top:550.38px;font-size:15.5px;line-height:15.5px;color:#000000;font-weight:normal;">$</div><div class="t" style="left:1457.10px;top:550.76px;font-size:16px;line-height:16px;color:#000000;font-weight:normal;letter-spacing:0.888px;">8,001.00</div><div class="t" style="left:1789.00px;top:550.76px;font-size:16px;line-height:16px;color:#000000;font-weight:normal;letter-spacing:0.502px;">00</div><div class="r" style="left:1818px;top:547px;width:76px;height:23px;overflow:hidden"><div class="t" style="left:12.70px;top:2.96px;font-size:16px;line-height:16px;color:#000000;font-weight:normal;letter-spacing:0.9px">01-10-20</div></div><div class="t" style="left:-480.5px;width:1000px;text-align:center;top:574.38px;font-size:15.5px;line-height:15.5px;color:#1d6139;font-weight:normal;letter-spacing:0.6px">28</div><div class="t" style="left:41.90px;top:574.38px;font-size:15.5px;line-height:15.5px;color:#000000;font-weight:normal;letter-spacing:1.091px;">Government</div><div class="t" style="left:193.80px;top:574.38px;font-size:15.5px;line-height:15.5px;color:#000000;font-weight:normal;letter-spacing:0.325px;">Canada</div><div class="t" style="left:448.20px;top:574.38px;font-size:15.5px;line-height:15.5px;color:#000000;font-weight:normal;letter-spacing:0.368px;">Paseo</div><div class="t" style="left:580.40px;top:574.38px;font-size:15.5px;line-height:15.5px;color:#000000;font-weight:normal;letter-spacing:1.489px;">None</div><div class="t" style="left:825.50px;top:574.76px;font-size:16px;line-height:16px;color:#000000;font-weight:normal;letter-spacing:0.868px;">1725</div><div class="t" style="left:878.30px;top:574.38px;font-size:15.5px;line-height:15.5px;color:#000000;font-weight:normal;">$</div><div class="t" style="left:946.50px;top:574.76px;font-size:16px;line-height:16px;color:#000000;font-weight:normal;letter-spacing:1.090px;">10.00</div><div class="t" style="left:1011.00px;top:574.38px;font-size:15.5px;line-height:15.5px;color:#000000;font-weight:normal;">$</div><div class="t" style="left:1054.55px;top:574.76px;font-size:16px;line-height:16px;color:#000000;font-weight:normal;letter-spacing:0.782px;">350.00</div><div class="t" style="left:1127.50px;top:574.38px;font-size:15.5px;line-height:15.5px;color:#000000;font-weight:normal;">$</div><div class="t" style="left:1148.60px;top:574.76px;font-size:16px;line-height:16px;color:#000000;font-weight:normal;letter-spacing:0.908px;">6,03,750.00</div><div class="t" style="left:1263.10px;top:574.38px;font-size:15.5px;line-height:15.5px;color:#000000;font-weight:normal;">$</div><div class="t" style="left:1335.30px;top:574.38px;font-size:15.5px;line-height:15.5px;color:#000000;font-weight:normal;">-</div><div class="t" style="left:1380.40px;top:574.38px;font-size:15.5px;line-height:15.5px;color:#000000;font-weight:normal;">$</div><div class="t" style="left:1432.00px;top:574.76px;font-size:16px;line-height:16px;color:#000000;font-weight:normal;letter-spacing:0.908px;">6,03,750.00</div><div class="t" style="left:1789.00px;top:574.76px;font-size:16px;line-height:16px;color:#000000;font-weight:normal;letter-spacing:0.502px;">00</div><div class="r" style="left:1818px;top:570px;width:76px;height:23px;overflow:hidden"><div class="t" style="left:12.70px;top:3.96px;font-size:16px;line-height:16px;color:#000000;font-weight:normal;letter-spacing:0.9px">01-11-20</div></div><div class="t" style="left:-480.5px;width:1000px;text-align:center;top:597.38px;font-size:15.5px;line-height:15.5px;color:#1d6139;font-weight:normal;letter-spacing:0.6px">29</div><div class="t" style="left:41.90px;top:597.38px;font-size:15.5px;line-height:15.5px;color:#000000;font-weight:normal;letter-spacing:0.642px;">Channel Partners</div><div class="t" style="left:192.80px;top:597.38px;font-size:15.5px;line-height:15.5px;color:#000000;font-weight:normal;letter-spacing:0.760px;">United States of America</div><div class="t" style="left:448.20px;top:597.38px;font-size:15.5px;line-height:15.5px;color:#000000;font-weight:normal;letter-spacing:0.368px;">Paseo</div><div class="t" style="left:580.40px;top:597.38px;font-size:15.5px;line-height:15.5px;color:#000000;font-weight:normal;letter-spacing:1.489px;">None</div><div class="t" style="left:835.95px;top:597.76px;font-size:16px;line-height:16px;color:#000000;font-weight:normal;letter-spacing:0.527px;">912</div><div class="t" style="left:878.30px;top:597.38px;font-size:15.5px;line-height:15.5px;color:#000000;font-weight:normal;">$</div><div class="t" style="left:946.50px;top:597.76px;font-size:16px;line-height:16px;color:#000000;font-weight:normal;letter-spacing:1.090px;">10.00</div><div class="t" style="left:1011.00px;top:597.38px;font-size:15.5px;line-height:15.5px;color:#000000;font-weight:normal;">$</div><div class="t" style="left:1063.00px;top:597.76px;font-size:16px;line-height:16px;color:#000000;font-weight:normal;letter-spacing:1.090px;">12.00</div><div class="t" style="left:1127.50px;top:597.38px;font-size:15.5px;line-height:15.5px;color:#000000;font-weight:normal;">$</div><div class="t" style="left:1163.25px;top:597.76px;font-size:16px;line-height:16px;color:#000000;font-weight:normal;letter-spacing:0.971px;">10,944.00</div><div class="t" style="left:1263.10px;top:597.38px;font-size:15.5px;line-height:15.5px;color:#000000;font-weight:normal;">$</div><div class="t" style="left:1335.30px;top:597.38px;font-size:15.5px;line-height:15.5px;color:#000000;font-weight:normal;">-</div><div class="t" style="left:1380.40px;top:597.38px;font-size:15.5px;line-height:15.5px;color:#000000;font-weight:normal;">$</div><div class="t" style="left:1446.65px;top:597.76px;font-size:16px;line-height:16px;color:#000000;font-weight:normal;letter-spacing:0.971px;">10,944.00</div><div class="t" style="left:1789.00px;top:597.76px;font-size:16px;line-height:16px;color:#000000;font-weight:normal;letter-spacing:0.502px;">00</div><div class="r" style="left:1818px;top:594px;width:76px;height:23px;overflow:hidden"><div class="t" style="left:12.70px;top:2.96px;font-size:16px;line-height:16px;color:#000000;font-weight:normal;letter-spacing:0.9px">01-11-20</div></div><div class="t" style="left:-480.5px;width:1000px;text-align:center;top:620.38px;font-size:15.5px;line-height:15.5px;color:#1d6139;font-weight:normal;letter-spacing:0.6px">30</div><div class="t" style="left:40.90px;top:620.38px;font-size:15.5px;line-height:15.5px;color:#000000;font-weight:normal;letter-spacing:1.520px;">Midmarket</div><div class="t" style="left:193.80px;top:620.38px;font-size:15.5px;line-height:15.5px;color:#000000;font-weight:normal;letter-spacing:0.325px;">Canada</div><div class="t" style="left:448.20px;top:620.38px;font-size:15.5px;line-height:15.5px;color:#000000;font-weight:normal;letter-spacing:0.368px;">Paseo</div><div class="t" style="left:580.40px;top:620.38px;font-size:15.5px;line-height:15.5px;color:#000000;font-weight:normal;letter-spacing:1.489px;">None</div><div class="t" style="left:826.50px;top:620.76px;font-size:16px;line-height:16px;color:#000000;font-weight:normal;letter-spacing:0.535px;">2152</div><div class="t" style="left:878.30px;top:620.38px;font-size:15.5px;line-height:15.5px;color:#000000;font-weight:normal;">$</div><div class="t" style="left:946.50px;top:620.76px;font-size:16px;line-height:16px;color:#000000;font-weight:normal;letter-spacing:1.090px;">10.00</div><div class="t" style="left:1011.00px;top:620.38px;font-size:15.5px;line-height:15.5px;color:#000000;font-weight:normal;">$</div><div class="t" style="left:1063.00px;top:620.76px;font-size:16px;line-height:16px;color:#000000;font-weight:normal;letter-spacing:1.090px;">15.00</div><div class="t" style="left:1127.50px;top:620.38px;font-size:15.5px;line-height:15.5px;color:#000000;font-weight:normal;">$</div><div class="t" style="left:1164.25px;top:620.76px;font-size:16px;line-height:16px;color:#000000;font-weight:normal;letter-spacing:0.846px;">32,280.00</div><div class="t" style="left:1263.10px;top:620.38px;font-size:15.5px;line-height:15.5px;color:#000000;font-weight:normal;">$</div><div class="t" style="left:1335.30px;top:620.38px;font-size:15.5px;line-height:15.5px;color:#000000;font-weight:normal;">-</div><div class="t" style="left:1380.40px;top:620.38px;font-size:15.5px;line-height:15.5px;color:#000000;font-weight:normal;">$</div><div class="t" style="left:1447.65px;top:620.76px;font-size:16px;line-height:16px;color:#000000;font-weight:normal;letter-spacing:0.846px;">32,280.00</div><div class="t" style="left:1789.00px;top:620.76px;font-size:16px;line-height:16px;color:#000000;font-weight:normal;letter-spacing:0.502px;">00</div><div class="r" style="left:1818px;top:617px;width:76px;height:23px;overflow:hidden"><div class="t" style="left:12.70px;top:2.96px;font-size:16px;line-height:16px;color:#000000;font-weight:normal;letter-spacing:0.9px">01-12-20</div></div><div class="t" style="left:-480.5px;width:1000px;text-align:center;top:644.38px;font-size:15.5px;line-height:15.5px;color:#1d6139;font-weight:normal;letter-spacing:0.6px">31</div><div class="t" style="left:41.90px;top:644.38px;font-size:15.5px;line-height:15.5px;color:#000000;font-weight:normal;letter-spacing:1.091px;">Government</div><div class="t" style="left:193.80px;top:644.38px;font-size:15.5px;line-height:15.5px;color:#000000;font-weight:normal;letter-spacing:0.325px;">Canada</div><div class="t" style="left:448.20px;top:644.38px;font-size:15.5px;line-height:15.5px;color:#000000;font-weight:normal;letter-spacing:0.368px;">Paseo</div><div class="t" style="left:580.40px;top:644.38px;font-size:15.5px;line-height:15.5px;color:#000000;font-weight:normal;letter-spacing:1.489px;">None</div><div class="t" style="left:825.50px;top:644.76px;font-size:16px;line-height:16px;color:#000000;font-weight:normal;letter-spacing:0.868px;">1817</div><div class="t" style="left:878.30px;top:644.38px;font-size:15.5px;line-height:15.5px;color:#000000;font-weight:normal;">$</div><div class="t" style="left:946.50px;top:644.76px;font-size:16px;line-height:16px;color:#000000;font-weight:normal;letter-spacing:1.090px;">10.00</div><div class="t" style="left:1011.00px;top:644.38px;font-size:15.5px;line-height:15.5px;color:#000000;font-weight:normal;">$</div><div class="t" style="left:1064.00px;top:644.76px;font-size:16px;line-height:16px;color:#000000;font-weight:normal;letter-spacing:0.840px;">20.00</div><div class="t" style="left:1127.50px;top:644.38px;font-size:15.5px;line-height:15.5px;color:#000000;font-weight:normal;">$</div><div class="t" style="left:1164.25px;top:644.76px;font-size:16px;line-height:16px;color:#000000;font-weight:normal;letter-spacing:0.846px;">36,340.00</div><div class="t" style="left:1263.10px;top:644.38px;font-size:15.5px;line-height:15.5px;color:#000000;font-weight:normal;">$</div><div class="t" style="left:1335.30px;top:644.38px;font-size:15.5px;line-height:15.5px;color:#000000;font-weight:normal;">-</div><div class="t" style="left:1380.40px;top:644.38px;font-size:15.5px;line-height:15.5px;color:#000000;font-weight:normal;">$</div><div class="t" style="left:1447.65px;top:644.76px;font-size:16px;line-height:16px;color:#000000;font-weight:normal;letter-spacing:0.846px;">36,340.00</div><div class="t" style="left:1789.00px;top:644.76px;font-size:16px;line-height:16px;color:#000000;font-weight:normal;letter-spacing:0.502px;">00</div><div class="r" style="left:1818px;top:640px;width:76px;height:23px;overflow:hidden"><div class="t" style="left:12.70px;top:3.96px;font-size:16px;line-height:16px;color:#000000;font-weight:normal;letter-spacing:0.9px">01-12-20</div></div><div class="t" style="left:-480.5px;width:1000px;text-align:center;top:667.38px;font-size:15.5px;line-height:15.5px;color:#1d6139;font-weight:normal;letter-spacing:0.6px">32</div><div class="t" style="left:41.90px;top:667.38px;font-size:15.5px;line-height:15.5px;color:#000000;font-weight:normal;letter-spacing:1.091px;">Government</div><div class="t" style="left:193.80px;top:667.38px;font-size:15.5px;line-height:15.5px;color:#000000;font-weight:normal;letter-spacing:1.102px;">Germany</div><div class="t" style="left:448.20px;top:667.38px;font-size:15.5px;line-height:15.5px;color:#000000;font-weight:normal;letter-spacing:0.368px;">Paseo</div><div class="t" style="left:580.40px;top:667.38px;font-size:15.5px;line-height:15.5px;color:#000000;font-weight:normal;letter-spacing:1.489px;">None</div><div class="t" style="left:825.50px;top:667.76px;font-size:16px;line-height:16px;color:#000000;font-weight:normal;letter-spacing:0.868px;">1513</div><div class="t" style="left:878.30px;top:667.38px;font-size:15.5px;line-height:15.5px;color:#000000;font-weight:normal;">$</div><div class="t" style="left:946.50px;top:667.76px;font-size:16px;line-height:16px;color:#000000;font-weight:normal;letter-spacing:1.090px;">10.00</div><div class="t" style="left:1011.00px;top:667.38px;font-size:15.5px;line-height:15.5px;color:#000000;font-weight:normal;">$</div><div class="t" style="left:1054.55px;top:667.76px;font-size:16px;line-height:16px;color:#000000;font-weight:normal;letter-spacing:0.782px;">350.00</div><div class="t" style="left:1127.50px;top:667.38px;font-size:15.5px;line-height:15.5px;color:#000000;font-weight:normal;">$</div><div class="t" style="left:1148.60px;top:667.76px;font-size:16px;line-height:16px;color:#000000;font-weight:normal;letter-spacing:0.908px;">5,29,550.00</div><div class="t" style="left:1263.10px;top:667.38px;font-size:15.5px;line-height:15.5px;color:#000000;font-weight:normal;">$</div><div class="t" style="left:1335.30px;top:667.38px;font-size:15.5px;line-height:15.5px;color:#000000;font-weight:normal;">-</div><div class="t" style="left:1380.40px;top:667.38px;font-size:15.5px;line-height:15.5px;color:#000000;font-weight:normal;">$</div><div class="t" style="left:1432.00px;top:667.76px;font-size:16px;line-height:16px;color:#000000;font-weight:normal;letter-spacing:0.908px;">5,29,550.00</div><div class="t" style="left:1789.00px;top:667.76px;font-size:16px;line-height:16px;color:#000000;font-weight:normal;letter-spacing:0.502px;">00</div><div class="r" style="left:1818px;top:664px;width:76px;height:23px;overflow:hidden"><div class="t" style="left:12.70px;top:2.96px;font-size:16px;line-height:16px;color:#000000;font-weight:normal;letter-spacing:0.9px">01-12-20</div></div><div class="t" style="left:-480.5px;width:1000px;text-align:center;top:690.38px;font-size:15.5px;line-height:15.5px;color:#1d6139;font-weight:normal;letter-spacing:0.6px">33</div><div class="t" style="left:41.90px;top:690.38px;font-size:15.5px;line-height:15.5px;color:#000000;font-weight:normal;letter-spacing:1.091px;">Government</div><div class="t" style="left:192.80px;top:690.38px;font-size:15.5px;line-height:15.5px;color:#000000;font-weight:normal;letter-spacing:1.385px;">Mexico</div><div class="t" style="left:449.20px;top:690.38px;font-size:15.5px;line-height:15.5px;color:#000000;font-weight:normal;letter-spacing:0.751px;">Velo</div><div class="t" style="left:580.40px;top:690.38px;font-size:15.5px;line-height:15.5px;color:#000000;font-weight:normal;letter-spacing:1.489px;">None</div><div class="t" style="left:825.50px;top:690.76px;font-size:16px;line-height:16px;color:#000000;font-weight:normal;letter-spacing:0.868px;">1493</div><div class="t" style="left:878.30px;top:690.38px;font-size:15.5px;line-height:15.5px;color:#000000;font-weight:normal;">$</div><div class="t" style="left:937.05px;top:690.76px;font-size:16px;line-height:16px;color:#000000;font-weight:normal;letter-spacing:0.982px;">120.00</div><div class="t" style="left:1011.00px;top:690.38px;font-size:15.5px;line-height:15.5px;color:#000000;font-weight:normal;">$</div><div class="t" style="left:1073.45px;top:690.76px;font-size:16px;line-height:16px;color:#000000;font-weight:normal;letter-spacing:0.936px;">7.00</div><div class="t" style="left:1127.50px;top:690.38px;font-size:15.5px;line-height:15.5px;color:#000000;font-weight:normal;">$</div><div class="t" style="left:1163.25px;top:690.76px;font-size:16px;line-height:16px;color:#000000;font-weight:normal;letter-spacing:0.971px;">10,451.00</div><div class="t" style="left:1263.10px;top:690.38px;font-size:15.5px;line-height:15.5px;color:#000000;font-weight:normal;">$</div><div class="t" style="left:1335.30px;top:690.38px;font-size:15.5px;line-height:15.5px;color:#000000;font-weight:normal;">-</div><div class="t" style="left:1380.40px;top:690.38px;font-size:15.5px;line-height:15.5px;color:#000000;font-weight:normal;">$</div><div class="t" style="left:1446.65px;top:690.76px;font-size:16px;line-height:16px;color:#000000;font-weight:normal;letter-spacing:0.971px;">10,451.00</div><div class="t" style="left:1789.00px;top:690.76px;font-size:16px;line-height:16px;color:#000000;font-weight:normal;letter-spacing:0.502px;">00</div><div class="r" style="left:1818px;top:687px;width:76px;height:23px;overflow:hidden"><div class="t" style="left:12.70px;top:2.96px;font-size:16px;line-height:16px;color:#000000;font-weight:normal;letter-spacing:0.9px">01-01-20</div></div><div class="t" style="left:-480.5px;width:1000px;text-align:center;top:714.38px;font-size:15.5px;line-height:15.5px;color:#1d6139;font-weight:normal;letter-spacing:0.6px">34</div><div class="t" style="left:40.90px;top:714.38px;font-size:15.5px;line-height:15.5px;color:#000000;font-weight:normal;letter-spacing:0.942px;">Enterprise</div><div class="t" style="left:192.80px;top:714.38px;font-size:15.5px;line-height:15.5px;color:#000000;font-weight:normal;letter-spacing:0.916px;">France</div><div class="t" style="left:449.20px;top:714.38px;font-size:15.5px;line-height:15.5px;color:#000000;font-weight:normal;letter-spacing:0.751px;">Velo</div><div class="t" style="left:580.40px;top:714.38px;font-size:15.5px;line-height:15.5px;color:#000000;font-weight:normal;letter-spacing:1.489px;">None</div><div class="t" style="left:825.50px;top:714.76px;font-size:16px;line-height:16px;color:#000000;font-weight:normal;letter-spacing:0.868px;">1804</div><div class="t" style="left:878.30px;top:714.38px;font-size:15.5px;line-height:15.5px;color:#000000;font-weight:normal;">$</div><div class="t" style="left:937.05px;top:714.76px;font-size:16px;line-height:16px;color:#000000;font-weight:normal;letter-spacing:0.982px;">120.00</div><div class="t" style="left:1011.00px;top:714.38px;font-size:15.5px;line-height:15.5px;color:#000000;font-weight:normal;">$</div><div class="t" style="left:1053.55px;top:714.76px;font-size:16px;line-height:16px;color:#000000;font-weight:normal;letter-spacing:0.982px;">125.00</div><div class="t" style="left:1127.50px;top:714.38px;font-size:15.5px;line-height:15.5px;color:#000000;font-weight:normal;">$</div><div class="t" style="left:1148.60px;top:714.76px;font-size:16px;line-height:16px;color:#000000;font-weight:normal;letter-spacing:0.908px;">2,25,500.00</div><div class="t" style="left:1263.10px;top:714.38px;font-size:15.5px;line-height:15.5px;color:#000000;font-weight:normal;">$</div><div class="t" style="left:1335.30px;top:714.38px;font-size:15.5px;line-height:15.5px;color:#000000;font-weight:normal;">-</div><div class="t" style="left:1380.40px;top:714.38px;font-size:15.5px;line-height:15.5px;color:#000000;font-weight:normal;">$</div><div class="t" style="left:1432.00px;top:714.76px;font-size:16px;line-height:16px;color:#000000;font-weight:normal;letter-spacing:0.908px;">2,25,500.00</div><div class="t" style="left:1789.00px;top:714.76px;font-size:16px;line-height:16px;color:#000000;font-weight:normal;letter-spacing:0.502px;">00</div><div class="r" style="left:1818px;top:710px;width:76px;height:23px;overflow:hidden"><div class="t" style="left:12.70px;top:3.96px;font-size:16px;line-height:16px;color:#000000;font-weight:normal;letter-spacing:0.9px">01-02-20</div></div><div class="t" style="left:-480.5px;width:1000px;text-align:center;top:737.38px;font-size:15.5px;line-height:15.5px;color:#1d6139;font-weight:normal;letter-spacing:0.6px">35</div><div class="t" style="left:41.90px;top:737.38px;font-size:15.5px;line-height:15.5px;color:#000000;font-weight:normal;letter-spacing:0.642px;">Channel Partners</div><div class="t" style="left:193.80px;top:737.38px;font-size:15.5px;line-height:15.5px;color:#000000;font-weight:normal;letter-spacing:1.102px;">Germany</div><div class="t" style="left:449.20px;top:737.38px;font-size:15.5px;line-height:15.5px;color:#000000;font-weight:normal;letter-spacing:0.751px;">Velo</div><div class="t" style="left:580.40px;top:737.38px;font-size:15.5px;line-height:15.5px;color:#000000;font-weight:normal;letter-spacing:1.489px;">None</div><div class="t" style="left:826.50px;top:737.76px;font-size:16px;line-height:16px;color:#000000;font-weight:normal;letter-spacing:0.535px;">2161</div><div class="t" style="left:878.30px;top:737.38px;font-size:15.5px;line-height:15.5px;color:#000000;font-weight:normal;">$</div><div class="t" style="left:937.05px;top:737.76px;font-size:16px;line-height:16px;color:#000000;font-weight:normal;letter-spacing:0.982px;">120.00</div><div class="t" style="left:1011.00px;top:737.38px;font-size:15.5px;line-height:15.5px;color:#000000;font-weight:normal;">$</div><div class="t" style="left:1063.00px;top:737.76px;font-size:16px;line-height:16px;color:#000000;font-weight:normal;letter-spacing:1.090px;">12.00</div><div class="t" style="left:1127.50px;top:737.38px;font-size:15.5px;line-height:15.5px;color:#000000;font-weight:normal;">$</div><div class="t" style="left:1164.25px;top:737.76px;font-size:16px;line-height:16px;color:#000000;font-weight:normal;letter-spacing:0.846px;">25,932.00</div><div class="t" style="left:1263.10px;top:737.38px;font-size:15.5px;line-height:15.5px;color:#000000;font-weight:normal;">$</div><div class="t" style="left:1335.30px;top:737.38px;font-size:15.5px;line-height:15.5px;color:#000000;font-weight:normal;">-</div><div class="t" style="left:1380.40px;top:737.38px;font-size:15.5px;line-height:15.5px;color:#000000;font-weight:normal;">$</div><div class="t" style="left:1447.65px;top:737.76px;font-size:16px;line-height:16px;color:#000000;font-weight:normal;letter-spacing:0.846px;">25,932.00</div><div class="t" style="left:1789.00px;top:737.76px;font-size:16px;line-height:16px;color:#000000;font-weight:normal;letter-spacing:0.502px;">00</div><div class="r" style="left:1818px;top:734px;width:76px;height:23px;overflow:hidden"><div class="t" style="left:12.70px;top:2.96px;font-size:16px;line-height:16px;color:#000000;font-weight:normal;letter-spacing:0.9px">01-03-20</div></div><div class="t" style="left:-480.5px;width:1000px;text-align:center;top:760.38px;font-size:15.5px;line-height:15.5px;color:#1d6139;font-weight:normal;letter-spacing:0.6px">36</div><div class="t" style="left:41.90px;top:760.38px;font-size:15.5px;line-height:15.5px;color:#000000;font-weight:normal;letter-spacing:1.091px;">Government</div><div class="t" style="left:193.80px;top:760.38px;font-size:15.5px;line-height:15.5px;color:#000000;font-weight:normal;letter-spacing:1.102px;">Germany</div><div class="t" style="left:449.20px;top:760.38px;font-size:15.5px;line-height:15.5px;color:#000000;font-weight:normal;letter-spacing:0.751px;">Velo</div><div class="t" style="left:580.40px;top:760.38px;font-size:15.5px;line-height:15.5px;color:#000000;font-weight:normal;letter-spacing:1.489px;">None</div><div class="t" style="left:825.50px;top:760.76px;font-size:16px;line-height:16px;color:#000000;font-weight:normal;letter-spacing:0.868px;">1006</div><div class="t" style="left:878.30px;top:760.38px;font-size:15.5px;line-height:15.5px;color:#000000;font-weight:normal;">$</div><div class="t" style="left:937.05px;top:760.76px;font-size:16px;line-height:16px;color:#000000;font-weight:normal;letter-spacing:0.982px;">120.00</div><div class="t" style="left:1011.00px;top:760.38px;font-size:15.5px;line-height:15.5px;color:#000000;font-weight:normal;">$</div><div class="t" style="left:1054.55px;top:760.76px;font-size:16px;line-height:16px;color:#000000;font-weight:normal;letter-spacing:0.782px;">350.00</div><div class="t" style="left:1127.50px;top:760.38px;font-size:15.5px;line-height:15.5px;color:#000000;font-weight:normal;">$</div><div class="t" style="left:1148.60px;top:760.76px;font-size:16px;line-height:16px;color:#000000;font-weight:normal;letter-spacing:0.908px;">3,52,100.00</div><div class="t" style="left:1263.10px;top:760.38px;font-size:15.5px;line-height:15.5px;color:#000000;font-weight:normal;">$</div><div class="t" style="left:1335.30px;top:760.38px;font-size:15.5px;line-height:15.5px;color:#000000;font-weight:normal;">-</div><div class="t" style="left:1380.40px;top:760.38px;font-size:15.5px;line-height:15.5px;color:#000000;font-weight:normal;">$</div><div class="t" style="left:1432.00px;top:760.76px;font-size:16px;line-height:16px;color:#000000;font-weight:normal;letter-spacing:0.908px;">3,52,100.00</div><div class="t" style="left:1549.40px;top:760.38px;font-size:15.5px;line-height:15.5px;color:#000000;font-weight:normal;letter-spacing:0.335px;">##########</div><div class="t" style="left:1652.60px;top:760.38px;font-size:15.5px;line-height:15.5px;color:#000000;font-weight:normal;">$</div><div class="t" style="left:1729.35px;top:760.76px;font-size:16px;line-height:16px;color:#000000;font-weight:normal;letter-spacing:0.846px;">90,540.00</div><div class="r" style="left:1818px;top:757px;width:76px;height:23px;overflow:hidden"><div class="t" style="left:12.70px;top:2.96px;font-size:16px;line-height:16px;color:#000000;font-weight:normal;letter-spacing:0.9px">01-06-20</div></div><div class="t" style="left:-480.5px;width:1000px;text-align:center;top:784.38px;font-size:15.5px;line-height:15.5px;color:#1d6139;font-weight:normal;letter-spacing:0.6px">37</div><div class="t" style="left:41.90px;top:784.38px;font-size:15.5px;line-height:15.5px;color:#000000;font-weight:normal;letter-spacing:0.642px;">Channel Partners</div><div class="t" style="left:193.80px;top:784.38px;font-size:15.5px;line-height:15.5px;color:#000000;font-weight:normal;letter-spacing:1.102px;">Germany</div><div class="t" style="left:449.20px;top:784.38px;font-size:15.5px;line-height:15.5px;color:#000000;font-weight:normal;letter-spacing:0.751px;">Velo</div><div class="t" style="left:580.40px;top:784.38px;font-size:15.5px;line-height:15.5px;color:#000000;font-weight:normal;letter-spacing:1.489px;">None</div><div class="t" style="left:825.50px;top:784.76px;font-size:16px;line-height:16px;color:#000000;font-weight:normal;letter-spacing:0.868px;">1545</div><div class="t" style="left:878.30px;top:784.38px;font-size:15.5px;line-height:15.5px;color:#000000;font-weight:normal;">$</div><div class="t" style="left:937.05px;top:784.76px;font-size:16px;line-height:16px;color:#000000;font-weight:normal;letter-spacing:0.982px;">120.00</div><div class="t" style="left:1011.00px;top:784.38px;font-size:15.5px;line-height:15.5px;color:#000000;font-weight:normal;">$</div><div class="t" style="left:1063.00px;top:784.76px;font-size:16px;line-height:16px;color:#000000;font-weight:normal;letter-spacing:1.090px;">12.00</div><div class="t" style="left:1127.50px;top:784.38px;font-size:15.5px;line-height:15.5px;color:#000000;font-weight:normal;">$</div><div class="t" style="left:1163.25px;top:784.76px;font-size:16px;line-height:16px;color:#000000;font-weight:normal;letter-spacing:0.971px;">18,540.00</div><div class="t" style="left:1263.10px;top:784.38px;font-size:15.5px;line-height:15.5px;color:#000000;font-weight:normal;">$</div><div class="t" style="left:1335.30px;top:784.38px;font-size:15.5px;line-height:15.5px;color:#000000;font-weight:normal;">-</div><div class="t" style="left:1380.40px;top:784.38px;font-size:15.5px;line-height:15.5px;color:#000000;font-weight:normal;">$</div><div class="t" style="left:1446.65px;top:784.76px;font-size:16px;line-height:16px;color:#000000;font-weight:normal;letter-spacing:0.971px;">18,540.00</div><div class="t" style="left:1544.90px;top:784.38px;font-size:15.5px;line-height:15.5px;color:#000000;font-weight:normal;">$</div><div class="t" style="left:1565.20px;top:784.76px;font-size:16px;line-height:16px;color:#000000;font-weight:normal;letter-spacing:0.888px;">4,635.00</div><div class="t" style="left:1652.60px;top:784.38px;font-size:15.5px;line-height:15.5px;color:#000000;font-weight:normal;">$</div><div class="t" style="left:1728.35px;top:784.76px;font-size:16px;line-height:16px;color:#000000;font-weight:normal;letter-spacing:0.971px;">13,905.00</div><div class="r" style="left:1818px;top:780px;width:76px;height:23px;overflow:hidden"><div class="t" style="left:12.70px;top:3.96px;font-size:16px;line-height:16px;color:#000000;font-weight:normal;letter-spacing:0.9px">01-06-20</div></div><div class="t" style="left:-480.5px;width:1000px;text-align:center;top:807.38px;font-size:15.5px;line-height:15.5px;color:#1d6139;font-weight:normal;letter-spacing:0.6px">38</div><div class="t" style="left:40.90px;top:807.38px;font-size:15.5px;line-height:15.5px;color:#000000;font-weight:normal;letter-spacing:0.942px;">Enterprise</div><div class="t" style="left:192.80px;top:807.38px;font-size:15.5px;line-height:15.5px;color:#000000;font-weight:normal;letter-spacing:0.760px;">United States of America</div><div class="t" style="left:449.20px;top:807.38px;font-size:15.5px;line-height:15.5px;color:#000000;font-weight:normal;letter-spacing:0.751px;">Velo</div><div class="t" style="left:580.40px;top:807.38px;font-size:15.5px;line-height:15.5px;color:#000000;font-weight:normal;letter-spacing:1.489px;">None</div><div class="t" style="left:826.50px;top:807.76px;font-size:16px;line-height:16px;color:#000000;font-weight:normal;letter-spacing:0.535px;">2821</div><div class="t" style="left:878.30px;top:807.38px;font-size:15.5px;line-height:15.5px;color:#000000;font-weight:normal;">$</div><div class="t" style="left:937.05px;top:807.76px;font-size:16px;line-height:16px;color:#000000;font-weight:normal;letter-spacing:0.982px;">120.00</div><div class="t" style="left:1011.00px;top:807.38px;font-size:15.5px;line-height:15.5px;color:#000000;font-weight:normal;">$</div><div class="t" style="left:1053.55px;top:807.76px;font-size:16px;line-height:16px;color:#000000;font-weight:normal;letter-spacing:0.982px;">125.00</div><div class="t" style="left:1127.50px;top:807.38px;font-size:15.5px;line-height:15.5px;color:#000000;font-weight:normal;">$</div><div class="t" style="left:1148.60px;top:807.76px;font-size:16px;line-height:16px;color:#000000;font-weight:normal;letter-spacing:0.908px;">3,52,625.00</div><div class="t" style="left:1263.10px;top:807.38px;font-size:15.5px;line-height:15.5px;color:#000000;font-weight:normal;">$</div><div class="t" style="left:1335.30px;top:807.38px;font-size:15.5px;line-height:15.5px;color:#000000;font-weight:normal;">-</div><div class="t" style="left:1380.40px;top:807.38px;font-size:15.5px;line-height:15.5px;color:#000000;font-weight:normal;">$</div><div class="t" style="left:1432.00px;top:807.76px;font-size:16px;line-height:16px;color:#000000;font-weight:normal;letter-spacing:0.908px;">3,52,625.00</div><div class="t" style="left:1549.40px;top:807.38px;font-size:15.5px;line-height:15.5px;color:#000000;font-weight:normal;letter-spacing:0.335px;">##########</div><div class="t" style="left:1652.60px;top:807.38px;font-size:15.5px;line-height:15.5px;color:#000000;font-weight:normal;">$</div><div class="t" style="left:1728.35px;top:807.76px;font-size:16px;line-height:16px;color:#000000;font-weight:normal;letter-spacing:0.971px;">14,105.00</div><div class="r" style="left:1818px;top:804px;width:76px;height:23px;overflow:hidden"><div class="t" style="left:12.70px;top:2.96px;font-size:16px;line-height:16px;color:#000000;font-weight:normal;letter-spacing:0.9px">01-08-20</div></div><div class="t" style="left:-480.5px;width:1000px;text-align:center;top:830.38px;font-size:15.5px;line-height:15.5px;color:#1d6139;font-weight:normal;letter-spacing:0.6px">39</div><div class="t" style="left:40.90px;top:830.38px;font-size:15.5px;line-height:15.5px;color:#000000;font-weight:normal;letter-spacing:0.942px;">Enterprise</div><div class="t" style="left:193.80px;top:830.38px;font-size:15.5px;line-height:15.5px;color:#000000;font-weight:normal;letter-spacing:0.325px;">Canada</div><div class="t" style="left:449.20px;top:830.38px;font-size:15.5px;line-height:15.5px;color:#000000;font-weight:normal;letter-spacing:0.751px;">Velo</div><div class="t" style="left:580.40px;top:830.38px;font-size:15.5px;line-height:15.5px;color:#000000;font-weight:normal;letter-spacing:1.489px;">None</div><div class="t" style="left:835.95px;top:830.76px;font-size:16px;line-height:16px;color:#000000;font-weight:normal;letter-spacing:0.527px;">345</div><div class="t" style="left:878.30px;top:830.38px;font-size:15.5px;line-height:15.5px;color:#000000;font-weight:normal;">$</div><div class="t" style="left:937.05px;top:830.76px;font-size:16px;line-height:16px;color:#000000;font-weight:normal;letter-spacing:0.982px;">120.00</div><div class="t" style="left:1011.00px;top:830.38px;font-size:15.5px;line-height:15.5px;color:#000000;font-weight:normal;">$</div><div class="t" style="left:1053.55px;top:830.76px;font-size:16px;line-height:16px;color:#000000;font-weight:normal;letter-spacing:0.982px;">125.00</div><div class="t" style="left:1127.50px;top:830.38px;font-size:15.5px;line-height:15.5px;color:#000000;font-weight:normal;">$</div><div class="t" style="left:1164.25px;top:830.76px;font-size:16px;line-height:16px;color:#000000;font-weight:normal;letter-spacing:0.846px;">43,125.00</div><div class="t" style="left:1263.10px;top:830.38px;font-size:15.5px;line-height:15.5px;color:#000000;font-weight:normal;">$</div><div class="t" style="left:1335.30px;top:830.38px;font-size:15.5px;line-height:15.5px;color:#000000;font-weight:normal;">-</div><div class="t" style="left:1380.40px;top:830.38px;font-size:15.5px;line-height:15.5px;color:#000000;font-weight:normal;">$</div><div class="t" style="left:1447.65px;top:830.76px;font-size:16px;line-height:16px;color:#000000;font-weight:normal;letter-spacing:0.846px;">43,125.00</div><div class="t" style="left:1549.40px;top:830.38px;font-size:15.5px;line-height:15.5px;color:#000000;font-weight:normal;letter-spacing:0.335px;">##########</div><div class="t" style="left:1652.60px;top:830.38px;font-size:15.5px;line-height:15.5px;color:#000000;font-weight:normal;">$</div><div class="t" style="left:1737.80px;top:830.76px;font-size:16px;line-height:16px;color:#000000;font-weight:normal;letter-spacing:1.031px;">1,725.00</div><div class="r" style="left:1818px;top:827px;width:76px;height:23px;overflow:hidden"><div class="t" style="left:12.70px;top:2.96px;font-size:16px;line-height:16px;color:#000000;font-weight:normal;letter-spacing:0.9px">01-10-20</div></div><div class="t" style="left:-480.5px;width:1000px;text-align:center;top:854.38px;font-size:15.5px;line-height:15.5px;color:#1d6139;font-weight:normal;letter-spacing:0.6px">40</div><div class="t" style="left:41.90px;top:854.38px;font-size:15.5px;line-height:15.5px;color:#000000;font-weight:normal;letter-spacing:0.338px;">Small Business</div><div class="t" style="left:193.80px;top:854.38px;font-size:15.5px;line-height:15.5px;color:#000000;font-weight:normal;letter-spacing:0.325px;">Canada</div><div class="t" style="left:449.20px;top:854.38px;font-size:15.5px;line-height:15.5px;color:#000000;font-weight:normal;letter-spacing:-1.203px;">VTT</div><div class="t" style="left:580.40px;top:854.38px;font-size:15.5px;line-height:15.5px;color:#000000;font-weight:normal;letter-spacing:1.489px;">None</div><div class="t" style="left:826.50px;top:854.76px;font-size:16px;line-height:16px;color:#000000;font-weight:normal;letter-spacing:0.535px;">2001</div><div class="t" style="left:878.30px;top:854.38px;font-size:15.5px;line-height:15.5px;color:#000000;font-weight:normal;">$</div><div class="t" style="left:938.05px;top:854.76px;font-size:16px;line-height:16px;color:#000000;font-weight:normal;letter-spacing:0.782px;">250.00</div><div class="t" style="left:1011.00px;top:854.38px;font-size:15.5px;line-height:15.5px;color:#000000;font-weight:normal;">$</div><div class="t" style="left:1054.55px;top:854.76px;font-size:16px;line-height:16px;color:#000000;font-weight:normal;letter-spacing:0.782px;">300.00</div><div class="t" style="left:1127.50px;top:854.38px;font-size:15.5px;line-height:15.5px;color:#000000;font-weight:normal;">$</div><div class="t" style="left:1148.60px;top:854.76px;font-size:16px;line-height:16px;color:#000000;font-weight:normal;letter-spacing:0.908px;">6,00,300.00</div><div class="t" style="left:1263.10px;top:854.38px;font-size:15.5px;line-height:15.5px;color:#000000;font-weight:normal;">$</div><div class="t" style="left:1335.30px;top:854.38px;font-size:15.5px;line-height:15.5px;color:#000000;font-weight:normal;">-</div><div class="t" style="left:1380.40px;top:854.38px;font-size:15.5px;line-height:15.5px;color:#000000;font-weight:normal;">$</div><div class="t" style="left:1432.00px;top:854.76px;font-size:16px;line-height:16px;color:#000000;font-weight:normal;letter-spacing:0.908px;">6,00,300.00</div><div class="t" style="left:1549.40px;top:854.38px;font-size:15.5px;line-height:15.5px;color:#000000;font-weight:normal;letter-spacing:0.335px;">##########</div><div class="t" style="left:1652.60px;top:854.38px;font-size:15.5px;line-height:15.5px;color:#000000;font-weight:normal;">$</div><div class="t" style="left:1712.70px;top:854.76px;font-size:16px;line-height:16px;color:#000000;font-weight:normal;letter-spacing:1.008px;">1,00,050.00</div><div class="r" style="left:1818px;top:850px;width:76px;height:23px;overflow:hidden"><div class="t" style="left:12.70px;top:3.96px;font-size:16px;line-height:16px;color:#000000;font-weight:normal;letter-spacing:0.9px">01-02-20</div></div><div class="t" style="left:41.10px;top:225.30px;font-size:15px;line-height:15px;color:#ffffff;font-weight:bold;letter-spacing:0.975px;">Segment</div><div class="r" style="left:163px;top:220px;width:25px;height:22px;background:linear-gradient(#ffffff,#e9e9e9);box-shadow:inset 1px 0 0 #d0d0d0"></div><svg class="r" style="left:170.5px;top:228px;" width="10" height="6" viewBox="0 0 10 6"><path d="M0.5 0.5H9.5L5 5Z" fill="#6a6a6a"/></svg><div class="t" style="left:193.40px;top:225.30px;font-size:15px;line-height:15px;color:#ffffff;font-weight:bold;letter-spacing:0.908px;">Country</div><div class="r" style="left:413px;top:220px;width:25px;height:22px;background:linear-gradient(#ffffff,#e9e9e9);box-shadow:inset 1px 0 0 #d0d0d0"></div><svg class="r" style="left:420.5px;top:228px;" width="10" height="6" viewBox="0 0 10 6"><path d="M0.5 0.5H9.5L5 5Z" fill="#6a6a6a"/></svg><div class="t" style="left:447.30px;top:225.30px;font-size:15px;line-height:15px;color:#ffffff;font-weight:bold;letter-spacing:0.905px;">Product</div><div class="r" style="left:545px;top:220px;width:25px;height:22px;background:linear-gradient(#ffffff,#e9e9e9);box-shadow:inset 1px 0 0 #d0d0d0"></div><svg class="r" style="left:552.5px;top:228px;" width="10" height="6" viewBox="0 0 10 6"><path d="M0.5 0.5H9.5L5 5Z" fill="#6a6a6a"/></svg><div class="t" style="left:580.40px;top:225.30px;font-size:15px;line-height:15px;color:#ffffff;font-weight:bold;letter-spacing:0.702px;">Discount Band</div><div class="r" style="left:709px;top:220px;width:25px;height:22px;background:linear-gradient(#ffffff,#e9e9e9);box-shadow:inset 1px 0 0 #d0d0d0"></div><svg class="r" style="left:716.5px;top:228px;" width="10" height="6" viewBox="0 0 10 6"><path d="M0.5 0.5H9.5L5 5Z" fill="#6a6a6a"/></svg><div class="t" style="left:739.70px;top:225.30px;font-size:15px;line-height:15px;color:#ffffff;font-weight:bold;letter-spacing:0.522px;">Units Sold</div><div class="r" style="left:842px;top:220px;width:25px;height:22px;background:linear-gradient(#ffffff,#e9e9e9);box-shadow:inset 1px 0 0 #d0d0d0"></div><svg class="r" style="left:849.5px;top:228px;" width="10" height="6" viewBox="0 0 10 6"><path d="M0.5 0.5H9.5L5 5Z" fill="#6a6a6a"/></svg><div class="t" style="left:877.30px;top:225.30px;font-size:15px;line-height:15px;color:#ffffff;font-weight:bold;letter-spacing:1.316px;">Manufacturi</div><div class="r" style="left:975px;top:220px;width:25px;height:22px;background:linear-gradient(#ffffff,#e9e9e9);box-shadow:inset 1px 0 0 #d0d0d0"></div><svg class="r" style="left:982.5px;top:228px;" width="10" height="6" viewBox="0 0 10 6"><path d="M0.5 0.5H9.5L5 5Z" fill="#6a6a6a"/></svg><div class="t" style="left:1011.40px;top:225.30px;font-size:15px;line-height:15px;color:#ffffff;font-weight:bold;letter-spacing:0.492px;">Sale Price</div><div class="r" style="left:1092px;top:220px;width:25px;height:22px;background:linear-gradient(#ffffff,#e9e9e9);box-shadow:inset 1px 0 0 #d0d0d0"></div><svg class="r" style="left:1099.5px;top:228px;" width="10" height="6" viewBox="0 0 10 6"><path d="M0.5 0.5H9.5L5 5Z" fill="#6a6a6a"/></svg><div class="t" style="left:1128.70px;top:225.30px;font-size:15px;line-height:15px;color:#ffffff;font-weight:bold;letter-spacing:0.322px;">Gross Sales</div><div class="r" style="left:1226px;top:220px;width:25px;height:22px;background:linear-gradient(#ffffff,#e9e9e9);box-shadow:inset 1px 0 0 #d0d0d0"></div><svg class="r" style="left:1233.5px;top:228px;" width="10" height="6" viewBox="0 0 10 6"><path d="M0.5 0.5H9.5L5 5Z" fill="#6a6a6a"/></svg><div class="t" style="left:1261.50px;top:225.30px;font-size:15px;line-height:15px;color:#ffffff;font-weight:bold;letter-spacing:0.729px;">Discounts</div><div class="r" style="left:1343px;top:220px;width:25px;height:22px;background:linear-gradient(#ffffff,#e9e9e9);box-shadow:inset 1px 0 0 #d0d0d0"></div><svg class="r" style="left:1350.5px;top:228px;" width="10" height="6" viewBox="0 0 10 6"><path d="M0.5 0.5H9.5L5 5Z" fill="#6a6a6a"/></svg><div class="t" style="left:1382.90px;top:225.30px;font-size:15px;line-height:15px;color:#ffffff;font-weight:bold;letter-spacing:0.311px;">Sales</div><div class="r" style="left:1510px;top:220px;width:25px;height:22px;background:linear-gradient(#ffffff,#e9e9e9);box-shadow:inset 1px 0 0 #d0d0d0"></div><svg class="r" style="left:1517.5px;top:228px;" width="10" height="6" viewBox="0 0 10 6"><path d="M0.5 0.5H9.5L5 5Z" fill="#6a6a6a"/></svg><div class="r" style="left:1617px;top:220px;width:25px;height:22px;background:linear-gradient(#ffffff,#e9e9e9);box-shadow:inset 1px 0 0 #d0d0d0"></div><svg class="r" style="left:1624.5px;top:228px;" width="10" height="6" viewBox="0 0 10 6"><path d="M0.5 0.5H9.5L5 5Z" fill="#6a6a6a"/></svg><div class="r" style="left:1791px;top:220px;width:25px;height:22px;background:linear-gradient(#ffffff,#e9e9e9);box-shadow:inset 1px 0 0 #d0d0d0"></div><svg class="r" style="left:1798.5px;top:228px;" width="10" height="6" viewBox="0 0 10 6"><path d="M0.5 0.5H9.5L5 5Z" fill="#6a6a6a"/></svg><div class="t" style="left:1820.80px;top:225.30px;font-size:15px;line-height:15px;color:#ffffff;font-weight:bold;letter-spacing:1.743px;">Date</div><div class="r" style="left:1894px;top:219px;width:30px;height:660px;background:#f0f0f0"></div><div class="r" style="left:1897px;top:218px;width:25px;height:3px;border:1px solid #c0c0c0;border-top:none;background:#fff;box-sizing:border-box"></div><div class="r" style="left:1897px;top:232px;width:25px;height:25px;background:#ffffff;border:1px solid #ababab;box-sizing:border-box"></div><div class="r" style="left:1897px;top:857px;width:24px;height:22px;background:#ffffff;border:1px solid #ababab;box-sizing:border-box"></div><svg class="r" style="left:1903px;top:866px;" width="12" height="7" viewBox="0 0 12 7"><path d="M0.5 0.5H11.5L6 6.5Z" fill="#333"/></svg><div class="r" style="left:0px;top:879px;width:1924px;height:32px;background:#e6e6e6"></div><div class="r" style="left:0px;top:879px;width:1924px;height:1px;background:#c8c8c8"></div><svg class="r" style="left:29px;top:888px;" width="9" height="13" viewBox="0 0 9 13"><path d="M7.5 0.5V12.5L0.5 6.5Z" fill="#b4b4b4"/></svg><svg class="r" style="left:64px;top:888px;" width="9" height="13" viewBox="0 0 9 13"><path d="M1 0.5V12.5L8 6.5Z" fill="#b4b4b4"/></svg><div class="r" style="left:119px;top:879px;width:89px;height:29px;background:#ffffff;border-bottom:2.5px solid #217346;box-sizing:border-box;box-shadow:inset 1px 0 0 #d4d4d4,inset -1px 0 0 #d4d4d4"></div><div class="t" style="left:131.60px;top:885.61px;font-size:17px;line-height:17px;color:#217346;font-weight:bold;letter-spacing:1.481px;">Sheet1</div><svg class="r" style="left:247px;top:883px;" width="24" height="24" viewBox="0 0 24 24"><circle cx="12" cy="12" r="10.5" fill="none" stroke="#6d6d6d" stroke-width="1.3"/><path d="M12 6V18M6 12H18" stroke="#6d6d6d" stroke-width="1.5"/></svg><svg class="r" style="left:1150px;top:887px;" width="5" height="16" viewBox="0 0 5 16"><rect x="0.5" y="0.5" width="3" height="3" fill="#a6a6a6"/><rect x="0.5" y="6.5" width="3" height="3" fill="#a6a6a6"/><rect x="0.5" y="12.5" width="3" height="3" fill="#a6a6a6"/></svg><div class="r" style="left:1171px;top:883px;width:498px;height:23px;background:#fff;border:1px solid #a6a6a6;box-sizing:border-box"></div><div class="r" style="left:1195px;top:883px;width:1px;height:23px;background:#a6a6a6"></div><svg class="r" style="left:1179px;top:889px;" width="8" height="11" viewBox="0 0 8 11"><path d="M7 0.5V10.5L0.5 5.5Z" fill="#262626"/></svg><div class="r" style="left:1864px;top:883px;width:25px;height:23px;background:#fff;border:1px solid #a6a6a6;box-sizing:border-box"></div><svg class="r" style="left:1873px;top:889px;" width="8" height="11" viewBox="0 0 8 11"><path d="M0.5 0.5V10.5L7 5.5Z" fill="#262626"/></svg><div class="r" style="left:0px;top:911px;width:1924px;height:31px;background:#f3f3f3"></div><div class="r" style="left:0px;top:911px;width:1924px;height:1px;background:#c4c4c4"></div><div class="r" style="left:0px;top:942px;width:1924px;height:2px;background:#adb5c2"></div><div class="r" style="left:0px;top:944px;width:1924px;height:2px;background:#e4e9f3"></div><div class="t" style="left:10.50px;top:920.15px;font-size:14px;line-height:14px;color:#303030;font-weight:normal;letter-spacing:0.508px;">Ready</div><svg class="r" style="left:81px;top:918px;" width="23" height="18" viewBox="0 0 23 18"><circle cx="5" cy="4.5" r="4" fill="#555"/><rect x="9" y="2.5" width="13" height="2.2" fill="#555"/><path d="M3.5 9.5H21.5V16.5H3.5Z" fill="none" stroke="#555" stroke-width="1.2"/><path d="M5.5 12H9M10.5 12H14M15.5 12H19.5M5.5 14.5H9M10.5 14.5H14M15.5 14.5H19.5" stroke="#555" stroke-width="1"/></svg><svg class="r" style="left:130px;top:917px;" width="24" height="22" viewBox="0 0 24 22"><path d="M8 3A8 8 0 1 0 14.5 17" fill="none" stroke="#555" stroke-width="1.6" stroke-dasharray="2.5 1.5"/><path d="M9.5 1V11H15" fill="none" stroke="#555" stroke-width="1.6"/><path d="M14 13L22 21M22 13L14 21" stroke="#555" stroke-width="2"/></svg><div class="t" style="left:156.90px;top:920.15px;font-size:14px;line-height:14px;color:#303030;font-weight:normal;letter-spacing:0.542px;">Accessibility: Investigate</div><div class="t" style="left:1386.40px;top:920.35px;font-size:14px;line-height:14px;color:#303030;font-weight:normal;letter-spacing:0.632px;">Count: 701</div><div class="r" style="left:1488px;top:912px;width:59px;height:30px;background:#c6c6c6"></div><svg class="r" style="left:1507px;top:917px;" width="21" height="19" viewBox="0 0 21 19"><path d="M0.5 0.5V18.5M5.5 0.5V18.5M10.5 0.5V18.5M15.5 0.5V18.5M20.5 0.5V18.5" stroke="#666" stroke-width="1"/><path d="M0.5 5.5H20.5M0.5 11.5H20.5M0.5 17.5H20.5" stroke="#666" stroke-width="1"/></svg><svg class="r" style="left:1567px;top:917px;" width="21" height="19" viewBox="0 0 21 19"><rect x="0.5" y="0.5" width="19" height="18" fill="none" stroke="#666" stroke-width="1"/><path d="M3 2.5V16.5M3 16.5H17M6 5.5H14M6 8.5H14M6 11.5H14M14 3V14H6V3Z" fill="none" stroke="#666" stroke-width="1"/></svg><svg class="r" style="left:1626px;top:917px;" width="21" height="17" viewBox="0 0 21 17"><path d="M0.5 0V16.5H20.5V0M4.5 0V11.5H16.5V0M10.5 0V11.5" fill="none" stroke="#666" stroke-width="1.1"/></svg><div class="r" style="left:1674px;top:925px;width:13px;height:1.3px;background:#555"></div><div class="r" style="left:1695px;top:925px;width:147px;height:2px;background:#404040"></div><div class="r" style="left:1753px;top:917px;width:9px;height:17px;background:#404040"></div><div class="r" style="left:1768px;top:920px;width:1.5px;height:11px;background:#404040"></div><svg class="r" style="left:1849px;top:919px;" width="13" height="13" viewBox="0 0 13 13"><path d="M6.5 0V13M0 6.5H13" stroke="#555" stroke-width="1.3"/></svg><div class="t" style="left:1879.70px;top:920.35px;font-size:14px;line-height:14px;color:#303030;font-weight:normal;letter-spacing:1.264px;">85%</div><div class="r" style="left:1526px;top:193px;width:262px;height:562px;background:#ffffff;border:1px solid #c8c8c8;border-radius:4px;box-sizing:border-box;box-shadow:1px 2px 5px rgba(0,0,0,0.22)"></div><div class="r" style="left:1527px;top:194px;width:260px;height:35px;background:#e9e9e9"></div><div class="r" style="left:1527px;top:408px;width:260px;height:34px;background:#e9e9e9"></div><div class="r" style="left:1527px;top:477px;width:260px;height:34px;background:#e9e9e9"></div><div class="r" style="left:1527px;top:615px;width:260px;height:34px;background:#e9e9e9"></div><div class="t" style="left:1537.90px;top:203.53px;font-size:16.5px;line-height:16.5px;color:#4a4a4a;font-weight:bold;letter-spacing:0.302px;">Cell Size</div><div class="t" style="left:1538.00px;top:418.03px;font-size:16.5px;line-height:16.5px;color:#4a4a4a;font-weight:bold;letter-spacing:0.491px;">Visibility</div><div class="t" style="left:1538.90px;top:485.53px;font-size:16.5px;line-height:16.5px;color:#4a4a4a;font-weight:bold;letter-spacing:0.542px;">Organize Sheets</div><div class="t" style="left:1537.90px;top:624.03px;font-size:16.5px;line-height:16.5px;color:#4a4a4a;font-weight:bold;letter-spacing:0.821px;">Protection</div><div class="t" style="left:1574.00px;top:241.61px;font-size:17px;line-height:17px;color:#595959;font-weight:normal;letter-spacing:0.257px;">Row <u>H</u>eight...</div><div class="t" style="left:1575.00px;top:275.61px;font-size:17px;line-height:17px;color:#595959;font-weight:normal;letter-spacing:0.534px;"><u>A</u>utoFit Row Height</div><div class="t" style="left:1575.00px;top:314.11px;font-size:17px;line-height:17px;color:#595959;font-weight:normal;letter-spacing:0.414px;">Column <u>W</u>idth...</div><div class="t" style="left:1575.00px;top:348.11px;font-size:17px;line-height:17px;color:#595959;font-weight:normal;letter-spacing:0.638px;">AutoF<u>i</u>t Column Width</div><div class="t" style="left:1574.00px;top:383.11px;font-size:17px;line-height:17px;color:#595959;font-weight:normal;letter-spacing:0.434px;"><u>D</u>efault Width...</div><div class="t" style="left:1574.00px;top:521.11px;font-size:17px;line-height:17px;color:#595959;font-weight:normal;letter-spacing:-0.044px;"><u>R</u>ename Sheet</div><div class="t" style="left:1574.00px;top:555.61px;font-size:17px;line-height:17px;color:#595959;font-weight:normal;letter-spacing:0.379px;"><u>M</u>ove or Copy Sheet...</div><div class="t" style="left:1575.00px;top:589.61px;font-size:17px;line-height:17px;color:#595959;font-weight:normal;letter-spacing:0.176px;"><u>T</u>ab Color</div><div class="t" style="left:1574.00px;top:659.61px;font-size:17px;line-height:17px;color:#595959;font-weight:normal;letter-spacing:0.057px;"><u>P</u>rotect Sheet...</div><div class="t" style="left:1574.00px;top:694.61px;font-size:17px;line-height:17px;color:#595959;font-weight:normal;letter-spacing:-0.080px;"><u>L</u>ock Cell</div><div class="t" style="left:1574.00px;top:731.11px;font-size:17px;line-height:17px;color:#595959;font-weight:normal;letter-spacing:-0.007px;">Format C<u>e</u>lls...</div><div class="r" style="left:1575px;top:301px;width:212px;height:1px;background:#dcdcdc"></div><div class="r" style="left:1575px;top:718px;width:212px;height:1px;background:#dcdcdc"></div><div class="r" style="left:1527px;top:442px;width:260px;height:34px;background:#c6c6c6"></div><div class="t" style="left:1573.90px;top:452.11px;font-size:17px;line-height:17px;color:#262626;font-weight:normal;letter-spacing:0.686px;">Hide &amp; <u>U</u>nhide</div><svg class="r" style="left:1766px;top:454px;" width="8" height="11" viewBox="0 0 8 11"><path d="M1 0.5L7 5.5L1 10.5Z" fill="#404040"/></svg><svg class="r" style="left:1766px;top:596px;" width="8" height="11" viewBox="0 0 8 11"><path d="M1 0.5L7 5.5L1 10.5Z" fill="#404040"/></svg><svg class="r" style="left:1532px;top:236px;" width="26" height="25" viewBox="0 0 26 25"><path d="M5.5 1.5V22.5M2 5L5.5 1.5L9 5M2 19L5.5 22.5L9 19" fill="none" stroke="#4a7ebb" stroke-width="1.3"/><path d="M24 2H12.5V22.5H24" fill="none" stroke="#6d6d6d" stroke-width="1.2"/></svg><svg class="r" style="left:1532px;top:312px;" width="28" height="22" viewBox="0 0 28 22"><path d="M2 9V1.5H24.5V9" fill="none" stroke="#6d6d6d" stroke-width="1.2"/><path d="M2 18H25M5.5 14.5L2 18L5.5 21.5M21.5 14.5L25 18L21.5 21.5" fill="none" stroke="#4a7ebb" stroke-width="1.3"/></svg><svg class="r" style="left:1540px;top:523px;" width="10" height="10" viewBox="0 0 10 10"><circle cx="5" cy="5" r="3.6" fill="#f5a020"/></svg><svg class="r" style="left:1533px;top:654px;" width="27" height="25" viewBox="0 0 27 25"><rect x="1.5" y="1.5" width="18" height="15" fill="#fff" stroke="#6d6d6d" stroke-width="1"/><path d="M1.5 6.5H19.5M1.5 11.5H19.5M7.5 1.5V16.5M13.5 1.5V16.5" stroke="#9a9a9a" stroke-width="1"/><path d="M16 15V12.5A3.5 3.5 0 0 1 23 12.5V15" fill="none" stroke="#e8c37b" stroke-width="1.6"/><rect x="14" y="15" width="11" height="9" rx="1" fill="#e8c37b"/></svg><div class="r" style="left:1530px;top:687px;width:30px;height:27px;background:#c6c6c6;border:1px solid #9a9a9a;box-sizing:border-box"></div><svg class="r" style="left:1537px;top:691px;" width="16" height="19" viewBox="0 0 16 19"><path d="M3.5 9V6A4.5 4.5 0 0 1 12.5 6V9" fill="none" stroke="#e8c37b" stroke-width="1.8"/><rect x="1" y="9" width="14" height="9.5" rx="1" fill="#e8c37b"/></svg><svg class="r" style="left:1535px;top:727px;" width="23" height="21" viewBox="0 0 23 21"><rect x="1" y="1" width="20" height="19" fill="#fff" stroke="#6d6d6d" stroke-width="1.1"/><rect x="1" y="1" width="20" height="4" fill="#4a7ebb"/><path d="M4 9H6M4 13H6M4 17H6M8.5 9H18M8.5 13H18M8.5 17H18" stroke="#6d6d6d" stroke-width="1.1"/></svg><div class="r" style="left:1312px;top:443px;width:214px;height:212px;background:#ffffff;border:1px solid #c8c8c8;border-radius:4px;box-sizing:border-box;box-shadow:1px 2px 5px rgba(0,0,0,0.22)"></div><div class="t" style="left:1359.30px;top:454.11px;font-size:17px;line-height:17px;color:#595959;font-weight:normal;letter-spacing:0.376px;">Hide <u>R</u>ows</div><div class="t" style="left:1359.30px;top:488.61px;font-size:17px;line-height:17px;color:#595959;font-weight:normal;letter-spacing:0.549px;">Hide <u>C</u>olumns</div><div class="t" style="left:1359.30px;top:522.81px;font-size:17px;line-height:17px;color:#595959;font-weight:normal;letter-spacing:0.235px;">Hide <u>S</u>heet</div><div class="t" style="left:1359.30px;top:560.11px;font-size:17px;line-height:17px;color:#595959;font-weight:normal;letter-spacing:0.330px;">Unhide R<u>o</u>ws</div><div class="t" style="left:1359.30px;top:595.01px;font-size:17px;line-height:17px;color:#595959;font-weight:normal;letter-spacing:0.456px;">Unhide Columns</div><div class="t" style="left:1359.30px;top:629.21px;font-size:17px;line-height:17px;color:#b4b4b4;font-weight:normal;letter-spacing:0.024px;">Un<u>h</u>ide Sheet...</div><div class="r" style="left:1360px;top:548px;width:165px;height:1px;background:#dcdcdc"></div><div class="r" style="left:1511px;top:101px;width:95px;height:95px;border:5px solid #e5202a;box-sizing:border-box"></div><div class="r" style="left:1547px;top:436px;width:247px;height:40px;border:5px solid #e5202a;box-sizing:border-box"></div><div class="r" style="left:1314px;top:441px;width:212px;height:103px;border:5px solid #e5202a;box-sizing:border-box"></div>
</body></html>
